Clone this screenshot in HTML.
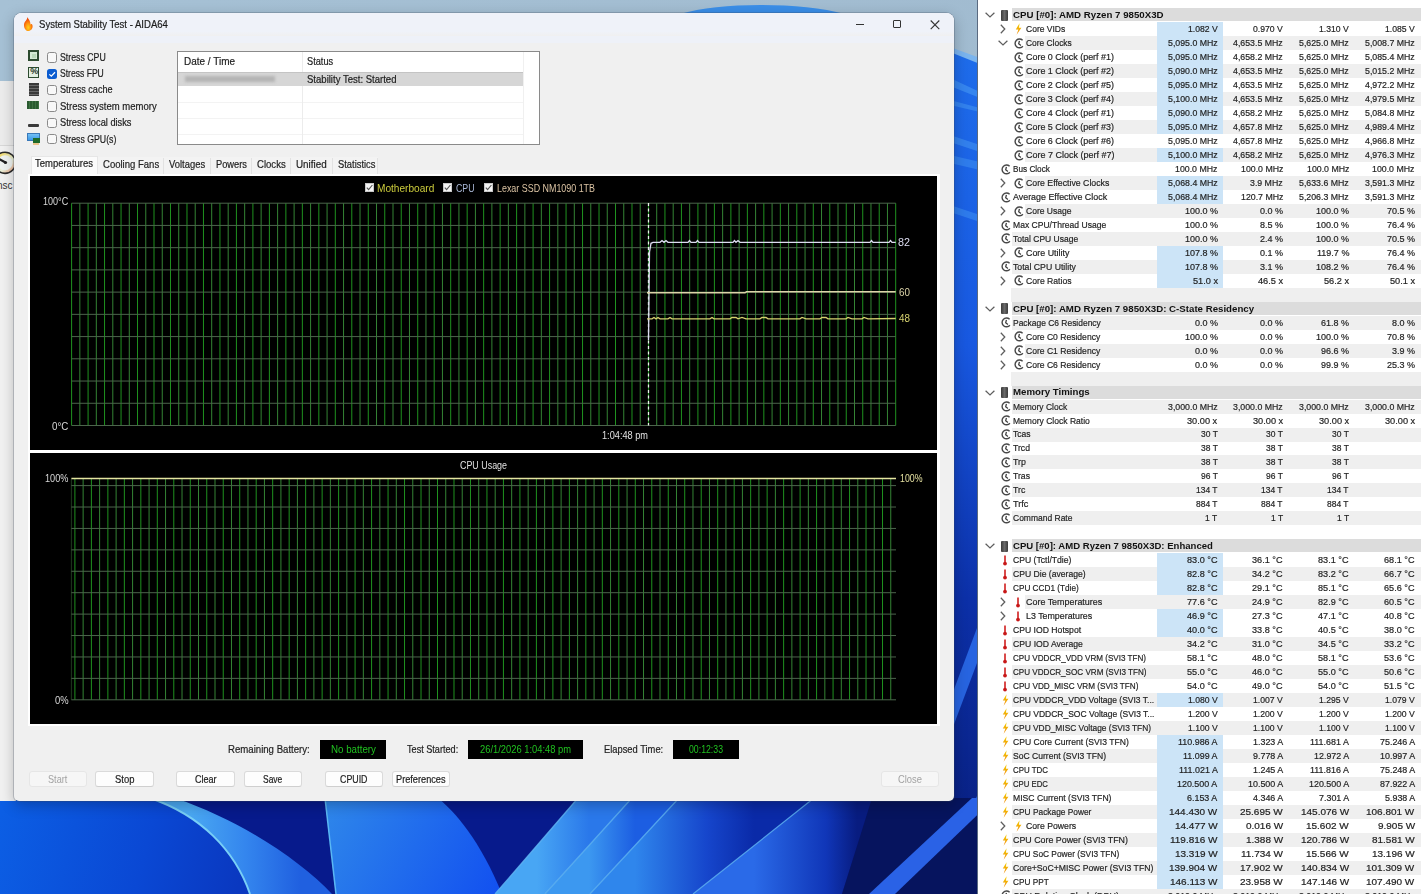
<!DOCTYPE html><html><head><meta charset="utf-8"><style>
*{margin:0;padding:0;box-sizing:border-box}
html,body{width:1428px;height:894px;overflow:hidden;background:#a9c2d6}
body{position:relative;font-family:"Liberation Sans",sans-serif;color:#1a1a1a}
.abs{position:absolute}
.t{position:absolute;white-space:pre;line-height:1}
.hw{-webkit-text-stroke:0.2px currentColor}
</style></head><body>
<svg class="abs" style="left:0;top:0" width="1428" height="894" viewBox="0 0 1428 894">
 <defs>
  <linearGradient id="wtop" x1="0" y1="0" x2="1" y2="0">
   <stop offset="0" stop-color="#a6c1d5"/><stop offset="1" stop-color="#9fb9ce"/>
  </linearGradient>
  <linearGradient id="wA" gradientUnits="userSpaceOnUse" x1="0" y1="820" x2="240" y2="880">
   <stop offset="0" stop-color="#0c5ee4"/><stop offset="0.6" stop-color="#0a48d4"/><stop offset="1" stop-color="#0a38c0"/>
  </linearGradient>
  <linearGradient id="wBand" gradientUnits="userSpaceOnUse" x1="190" y1="850" x2="300" y2="850">
   <stop offset="0" stop-color="#4aa8f2"/><stop offset="0.5" stop-color="#3486ee"/><stop offset="1" stop-color="#2060e0"/>
  </linearGradient>
  <linearGradient id="wC" gradientUnits="userSpaceOnUse" x1="330" y1="800" x2="500" y2="894">
   <stop offset="0" stop-color="#2e86ea"/><stop offset="1" stop-color="#1250f0"/>
  </linearGradient>
  <linearGradient id="wS1" gradientUnits="userSpaceOnUse" x1="537" y1="847" x2="589" y2="847">
   <stop offset="0" stop-color="#48a6f4"/><stop offset="1" stop-color="#2a78ea"/>
  </linearGradient>
  <linearGradient id="wS2" gradientUnits="userSpaceOnUse" x1="589" y1="847" x2="635" y2="847">
   <stop offset="0" stop-color="#3c98f0"/><stop offset="1" stop-color="#1c5ee2"/>
  </linearGradient>
  <linearGradient id="wS3" gradientUnits="userSpaceOnUse" x1="635" y1="847" x2="754" y2="847">
   <stop offset="0" stop-color="#2f86ec"/><stop offset="0.6" stop-color="#1646cc"/><stop offset="1" stop-color="#0a2aa8"/>
  </linearGradient>
  <linearGradient id="wS4" gradientUnits="userSpaceOnUse" x1="754" y1="847" x2="857" y2="847">
   <stop offset="0" stop-color="#2a6ae8"/><stop offset="0.7" stop-color="#1036b8"/><stop offset="1" stop-color="#081c80"/>
  </linearGradient>
  <linearGradient id="wR" x1="0" y1="0" x2="0" y2="1">
   <stop offset="0" stop-color="#1e6cea"/><stop offset="0.35" stop-color="#1858e0"/><stop offset="0.65" stop-color="#0c30a8"/><stop offset="1" stop-color="#081c78"/>
  </linearGradient>
 </defs>
 <rect x="0" y="0" width="1428" height="894" fill="url(#wtop)"/>
 <path d="M680 14 C720 2 800 2 845 14 Z" fill="#3a8ee8"/>
 <!-- right strip -->
 <path d="M950 50 L980 62 L980 894 L950 894 Z" fill="url(#wR)"/>
 <path d="M950 47 L980 58 L980 64 L950 52 Z" fill="#7ab4ee"/>
 <path d="M950 78 L980 92 L980 98 L950 86 Z" fill="#3c8cf0" opacity="0.8"/>
 <path d="M950 100 L980 108 L980 112 L950 105 Z" fill="#3c8cf0" opacity="0.7"/>
 <path d="M950 135 L980 145 L980 152 L950 142 Z" fill="#3c8cf0" opacity="0.7"/>
 <path d="M950 155 L980 162 L980 170 L950 163 Z" fill="#3c8cf0" opacity="0.6"/>
 <path d="M950 205 L980 215 L980 222 L950 212 Z" fill="#3c8cf0" opacity="0.6"/>
 <path d="M950 700 L980 620 L980 655 L950 735 Z" fill="#2a6ae8" opacity="0.9"/>
 <path d="M950 850 L980 790 L980 815 L950 875 Z" fill="#2a6ae8" opacity="0.8"/>
 <!-- bottom strip -->
 <rect x="0" y="798" width="980" height="96" fill="#071a8c"/>
 <path d="M0 798 L150 798 C200 815 235 850 250 894 L0 894 Z" fill="url(#wA)"/>
 <path d="M150 798 L175 798 C240 820 300 860 332 894 L250 894 C235 850 200 815 150 798 Z" fill="url(#wBand)"/>
 <path d="M150 798 C200 815 235 850 250 894" fill="none" stroke="#78cff6" stroke-width="2"/>
 <path d="M325 798 L438 798 C455 812 480 840 502 894 L336 894 Z" fill="url(#wC)"/>
 <path d="M325 798 L336 894" stroke="#5ab8f4" stroke-width="1.5"/>
 <path d="M578 798 L632 798 L545 894 L495 894 Z" fill="url(#wS1)"/>
 <path d="M632 798 L679 798 L590 894 L545 894 Z" fill="url(#wS2)"/>
 <path d="M679 798 L814 798 L693 894 L590 894 Z" fill="url(#wS3)"/>
 <path d="M814 798 L872 798 L842 894 L693 894 Z" fill="url(#wS4)"/>
 <path d="M872 798 L980 798 L980 894 L842 894 Z" fill="#06145e"/>
 <path d="M972 798 L995 798 L895 894 L869 894 Z" fill="#2a62e6"/>
 <path d="M578 798 L495 894 M632 798 L545 894 M679 798 L590 894 M814 798 L693 894" stroke="#62b8f4" stroke-width="1.2" opacity="0.8"/>
</svg>
<div class="abs" style="left:0;top:81px;width:16px;height:720px;background:#ececec"></div>
<div class="abs" style="left:0;top:145px;width:16px;height:656px;background:#f1f1f1;border-top:1px solid #d8d8d8"></div>
<svg class="abs" style="left:0;top:148px" width="16" height="45" viewBox="0 0 16 45">
 <defs><linearGradient id="gg" x1="0" y1="0" x2="1" y2="1"><stop offset="0" stop-color="#f4d040"/><stop offset="0.6" stop-color="#e8f0d8"/><stop offset="1" stop-color="#e89070"/></linearGradient></defs>
 <circle cx="5" cy="14.8" r="10.6" fill="url(#gg)" stroke="#2a2a2a" stroke-width="1.6"/>
 <circle cx="5" cy="14.8" r="7.5" fill="#eef2f0"/>
 <path d="M-1 11 L5.5 14.5" stroke="#222" stroke-width="2.2"/>
 <circle cx="5.5" cy="14.5" r="1.6" fill="#222"/>
 <text x="-3" y="40.5" font-family="Liberation Sans" font-size="10" fill="#333">nsc</text>
</svg>
<div class="abs" style="left:14px;top:12.5px;width:940px;height:788px;background:#f0f0f0;border-radius:8px 8px 5px 5px;box-shadow:0 0 0 1px rgba(60,70,90,0.25),0 4px 14px rgba(0,0,0,0.25);overflow:hidden">
 <div class="abs" style="left:0;top:0;width:940px;height:30px;background:#eef1f8"></div>
</div>
<div class="abs" style="left:14px;top:12.5px;width:940px;height:23px;background:linear-gradient(#eff2f9,#eff2f9 80%,#f0f0f0);border-radius:8px 8px 0 0"></div>
<svg class="abs" style="left:21px;top:16px" width="13" height="16" viewBox="0 0 13 16">
 <defs><radialGradient id="fl" cx="0.5" cy="0.75" r="0.6"><stop offset="0" stop-color="#ffd21a"/><stop offset="0.5" stop-color="#ff9410"/><stop offset="1" stop-color="#f04a08"/></radialGradient></defs>
 <path d="M6 1 C7 4 3 5 3 9 C3 13 5.5 15 7 15 C10 15 12 12.5 11.5 9.5 C11 7.5 10 8 9.5 8.5 C9.5 6 8 3 6 1Z" fill="url(#fl)"/>
</svg>
<div class="t hw" style="left:38.60px;top:18.69px;font-size:10.60px;color:#1c1c1c;transform:scaleX(0.9023);transform-origin:0 0">System Stability Test - AIDA64</div>
<div class="abs" style="left:856px;top:23.7px;width:8px;height:1px;background:#333"></div>
<div class="abs" style="left:893px;top:19.7px;width:8.2px;height:8.2px;border:1.1px solid #333;border-radius:1px"></div>
<svg class="abs" style="left:930px;top:19.5px" width="10" height="10" viewBox="0 0 10 10"><path d="M0.7 0.5 L9.3 9.2 M9.3 0.5 L0.7 9.2" stroke="#333" stroke-width="1.1"/></svg>
<div class="abs" style="left:47.2px;top:52.4px;width:10.3px;height:10.3px;border-radius:2.5px;background:#f8f8f8;border:1px solid #8a8a8a"></div>
<div class="t hw" style="left:60.20px;top:51.71px;font-size:10.50px;color:#1c1c1c;transform:scaleX(0.8351);transform-origin:0 0">Stress CPU</div>
<div class="abs" style="left:47.2px;top:68.6px;width:10.3px;height:10.3px;border-radius:2.5px;background:#0b5cd0"></div>
<svg class="abs" style="left:47.2px;top:68.6px" width="10.3" height="10.3" viewBox="0 0 10 10"><path d="M2.3 5.2 L4.2 7 L7.8 3.2" fill="none" stroke="#fff" stroke-width="1.2"/></svg>
<div class="t hw" style="left:60.20px;top:67.91px;font-size:10.50px;color:#1c1c1c;transform:scaleX(0.8160);transform-origin:0 0">Stress FPU</div>
<div class="abs" style="left:47.2px;top:85.0px;width:10.3px;height:10.3px;border-radius:2.5px;background:#f8f8f8;border:1px solid #8a8a8a"></div>
<div class="t hw" style="left:60.20px;top:84.31px;font-size:10.50px;color:#1c1c1c;transform:scaleX(0.8667);transform-origin:0 0">Stress cache</div>
<div class="abs" style="left:47.2px;top:101.4px;width:10.3px;height:10.3px;border-radius:2.5px;background:#f8f8f8;border:1px solid #8a8a8a"></div>
<div class="t hw" style="left:60.20px;top:100.71px;font-size:10.50px;color:#1c1c1c;transform:scaleX(0.9057);transform-origin:0 0">Stress system memory</div>
<div class="abs" style="left:47.2px;top:117.8px;width:10.3px;height:10.3px;border-radius:2.5px;background:#f8f8f8;border:1px solid #8a8a8a"></div>
<div class="t hw" style="left:60.20px;top:117.11px;font-size:10.50px;color:#1c1c1c;transform:scaleX(0.8815);transform-origin:0 0">Stress local disks</div>
<div class="abs" style="left:47.2px;top:134.2px;width:10.3px;height:10.3px;border-radius:2.5px;background:#f8f8f8;border:1px solid #8a8a8a"></div>
<div class="t hw" style="left:60.20px;top:133.51px;font-size:10.50px;color:#1c1c1c;transform:scaleX(0.8334);transform-origin:0 0">Stress GPU(s)</div>
<div class="abs" style="left:28.2px;top:50.2px;width:11.2px;height:11.2px;border:2.2px solid #2c4b2f;background:#d3ead3"></div>
<div class="abs" style="left:31.8px;top:53.8px;width:4px;height:4px;background:#b8d8b8"></div>
<div class="abs" style="left:28.2px;top:66.8px;width:11.2px;height:11.2px;border:1.8px solid #2c4b2f;background:#e3efe3"></div>
<div class="t" style="left:30.2px;top:67.2px;font-size:9px;color:#2a3a2a;font-weight:bold;letter-spacing:-0.5px">%</div>
<div class="abs" style="left:28.5px;top:83px;width:10.5px;height:13px;background:repeating-linear-gradient(#3a3a3a 0 2px,#6a6a6a 2px 3px)"></div>
<div class="abs" style="left:27.3px;top:101.1px;width:11.8px;height:8.2px;background:repeating-linear-gradient(90deg,#2a5a30 0 2px,#3c7040 2px 3px)"></div>
<div class="abs" style="left:28px;top:123.6px;width:11px;height:3.4px;background:#3a3a3a;border-radius:1px"></div>
<div class="abs" style="left:27px;top:133.2px;width:13px;height:7.5px;background:linear-gradient(#74c0f4,#3a98e8);border:1px solid #3a78b8"></div>
<div class="abs" style="left:32.5px;top:138px;width:7px;height:4.5px;background:#1e6a2a"></div>
<div class="abs" style="left:33px;top:142.5px;width:6px;height:2px;background:#e8b060;opacity:0.7"></div>
<div class="abs" style="left:177.4px;top:50.5px;width:363.1px;height:94.1px;background:#fff;border:1px solid #8a8a8a"></div>
<div class="abs" style="left:178.4px;top:102.1px;width:345px;height:1px;background:#f3f3f3"></div>
<div class="abs" style="left:178.4px;top:118.1px;width:345px;height:1px;background:#f3f3f3"></div>
<div class="abs" style="left:178.4px;top:133.6px;width:345px;height:1px;background:#f3f3f3"></div>
<div class="abs" style="left:301.7px;top:51.5px;width:1px;height:92px;background:#ececec"></div>
<div class="abs" style="left:523px;top:51.5px;width:1px;height:92px;background:#f0f0f0"></div>
<div class="abs" style="left:178.4px;top:71.5px;width:345px;height:14.6px;background:#d6d6d6;border-top:1px solid #c4c4c4"></div>
<div class="abs" style="left:185px;top:75.5px;width:90px;height:6px;background:#b4b4b4;filter:blur(1.5px)"></div>
<div class="t hw" style="left:183.60px;top:55.96px;font-size:10.80px;color:#222;transform:scaleX(0.9236);transform-origin:0 0">Date / Time</div>
<div class="t hw" style="left:306.80px;top:55.96px;font-size:10.80px;color:#222;transform:scaleX(0.8557);transform-origin:0 0">Status</div>
<div class="t hw" style="left:306.80px;top:73.66px;font-size:10.80px;color:#1c1c1c;transform:scaleX(0.8839);transform-origin:0 0">Stability Test: Started</div>
<div class="abs" style="left:98px;top:157px;width:280px;height:19px;background:#f3f3f3"></div>
<div class="abs" style="left:163.0px;top:158px;width:1px;height:18px;background:#e2e2e2"></div>
<div class="abs" style="left:210.0px;top:158px;width:1px;height:18px;background:#e2e2e2"></div>
<div class="abs" style="left:251.0px;top:158px;width:1px;height:18px;background:#e2e2e2"></div>
<div class="abs" style="left:290.4px;top:158px;width:1px;height:18px;background:#e2e2e2"></div>
<div class="abs" style="left:331.5px;top:158px;width:1px;height:18px;background:#e2e2e2"></div>
<div class="abs" style="left:377.4px;top:158px;width:1px;height:18px;background:#e2e2e2"></div>
<div class="abs" style="left:31px;top:156.2px;width:67px;height:20px;background:#fbfbfb;border:1px solid #e6e6e6;border-bottom:none"></div>
<div class="t hw" style="left:34.70px;top:157.76px;font-size:10.80px;color:#1c1c1c;transform:scaleX(0.8784);transform-origin:0 0">Temperatures</div>
<div class="t hw" style="left:103.40px;top:159.36px;font-size:10.80px;color:#222;transform:scaleX(0.8832);transform-origin:0 0">Cooling Fans</div>
<div class="t hw" style="left:169.30px;top:159.36px;font-size:10.80px;color:#222;transform:scaleX(0.8713);transform-origin:0 0">Voltages</div>
<div class="t hw" style="left:215.60px;top:159.36px;font-size:10.80px;color:#222;transform:scaleX(0.8608);transform-origin:0 0">Powers</div>
<div class="t hw" style="left:256.60px;top:159.36px;font-size:10.80px;color:#222;transform:scaleX(0.8857);transform-origin:0 0">Clocks</div>
<div class="t hw" style="left:296.00px;top:159.36px;font-size:10.80px;color:#222;transform:scaleX(0.9132);transform-origin:0 0">Unified</div>
<div class="t hw" style="left:337.50px;top:159.36px;font-size:10.80px;color:#222;transform:scaleX(0.8678);transform-origin:0 0">Statistics</div>
<div class="abs" style="left:28px;top:174px;width:911.5px;height:551.7px;background:#fff"></div>
<div class="abs" style="left:30.3px;top:176px;width:907.2px;height:273.8px;background:#000"></div>
<div class="abs" style="left:30.3px;top:453.4px;width:907.2px;height:270.3px;background:#000"></div>
<svg class="abs" style="left:0;top:0" width="1428" height="894" viewBox="0 0 1428 894"><line x1="71.60" y1="203.20" x2="71.60" y2="425.50" stroke="#1f921f" stroke-width="1"/><line x1="79.84" y1="203.20" x2="79.84" y2="425.50" stroke="#348434" stroke-width="1"/><line x1="88.08" y1="203.20" x2="88.08" y2="425.50" stroke="#1f921f" stroke-width="1"/><line x1="96.32" y1="203.20" x2="96.32" y2="425.50" stroke="#348434" stroke-width="1"/><line x1="104.56" y1="203.20" x2="104.56" y2="425.50" stroke="#1f921f" stroke-width="1"/><line x1="112.80" y1="203.20" x2="112.80" y2="425.50" stroke="#348434" stroke-width="1"/><line x1="121.05" y1="203.20" x2="121.05" y2="425.50" stroke="#1f921f" stroke-width="1"/><line x1="129.29" y1="203.20" x2="129.29" y2="425.50" stroke="#348434" stroke-width="1"/><line x1="137.53" y1="203.20" x2="137.53" y2="425.50" stroke="#1f921f" stroke-width="1"/><line x1="145.77" y1="203.20" x2="145.77" y2="425.50" stroke="#348434" stroke-width="1"/><line x1="154.01" y1="203.20" x2="154.01" y2="425.50" stroke="#1f921f" stroke-width="1"/><line x1="162.25" y1="203.20" x2="162.25" y2="425.50" stroke="#348434" stroke-width="1"/><line x1="170.49" y1="203.20" x2="170.49" y2="425.50" stroke="#1f921f" stroke-width="1"/><line x1="178.73" y1="203.20" x2="178.73" y2="425.50" stroke="#348434" stroke-width="1"/><line x1="186.97" y1="203.20" x2="186.97" y2="425.50" stroke="#1f921f" stroke-width="1"/><line x1="195.21" y1="203.20" x2="195.21" y2="425.50" stroke="#348434" stroke-width="1"/><line x1="203.46" y1="203.20" x2="203.46" y2="425.50" stroke="#1f921f" stroke-width="1"/><line x1="211.70" y1="203.20" x2="211.70" y2="425.50" stroke="#348434" stroke-width="1"/><line x1="219.94" y1="203.20" x2="219.94" y2="425.50" stroke="#1f921f" stroke-width="1"/><line x1="228.18" y1="203.20" x2="228.18" y2="425.50" stroke="#348434" stroke-width="1"/><line x1="236.42" y1="203.20" x2="236.42" y2="425.50" stroke="#1f921f" stroke-width="1"/><line x1="244.66" y1="203.20" x2="244.66" y2="425.50" stroke="#348434" stroke-width="1"/><line x1="252.90" y1="203.20" x2="252.90" y2="425.50" stroke="#1f921f" stroke-width="1"/><line x1="261.14" y1="203.20" x2="261.14" y2="425.50" stroke="#348434" stroke-width="1"/><line x1="269.38" y1="203.20" x2="269.38" y2="425.50" stroke="#1f921f" stroke-width="1"/><line x1="277.62" y1="203.20" x2="277.62" y2="425.50" stroke="#348434" stroke-width="1"/><line x1="285.87" y1="203.20" x2="285.87" y2="425.50" stroke="#1f921f" stroke-width="1"/><line x1="294.11" y1="203.20" x2="294.11" y2="425.50" stroke="#348434" stroke-width="1"/><line x1="302.35" y1="203.20" x2="302.35" y2="425.50" stroke="#1f921f" stroke-width="1"/><line x1="310.59" y1="203.20" x2="310.59" y2="425.50" stroke="#348434" stroke-width="1"/><line x1="318.83" y1="203.20" x2="318.83" y2="425.50" stroke="#1f921f" stroke-width="1"/><line x1="327.07" y1="203.20" x2="327.07" y2="425.50" stroke="#348434" stroke-width="1"/><line x1="335.31" y1="203.20" x2="335.31" y2="425.50" stroke="#1f921f" stroke-width="1"/><line x1="343.55" y1="203.20" x2="343.55" y2="425.50" stroke="#348434" stroke-width="1"/><line x1="351.79" y1="203.20" x2="351.79" y2="425.50" stroke="#1f921f" stroke-width="1"/><line x1="360.03" y1="203.20" x2="360.03" y2="425.50" stroke="#348434" stroke-width="1"/><line x1="368.28" y1="203.20" x2="368.28" y2="425.50" stroke="#1f921f" stroke-width="1"/><line x1="376.52" y1="203.20" x2="376.52" y2="425.50" stroke="#348434" stroke-width="1"/><line x1="384.76" y1="203.20" x2="384.76" y2="425.50" stroke="#1f921f" stroke-width="1"/><line x1="393.00" y1="203.20" x2="393.00" y2="425.50" stroke="#348434" stroke-width="1"/><line x1="401.24" y1="203.20" x2="401.24" y2="425.50" stroke="#1f921f" stroke-width="1"/><line x1="409.48" y1="203.20" x2="409.48" y2="425.50" stroke="#348434" stroke-width="1"/><line x1="417.72" y1="203.20" x2="417.72" y2="425.50" stroke="#1f921f" stroke-width="1"/><line x1="425.96" y1="203.20" x2="425.96" y2="425.50" stroke="#348434" stroke-width="1"/><line x1="434.20" y1="203.20" x2="434.20" y2="425.50" stroke="#1f921f" stroke-width="1"/><line x1="442.45" y1="203.20" x2="442.45" y2="425.50" stroke="#348434" stroke-width="1"/><line x1="450.69" y1="203.20" x2="450.69" y2="425.50" stroke="#1f921f" stroke-width="1"/><line x1="458.93" y1="203.20" x2="458.93" y2="425.50" stroke="#348434" stroke-width="1"/><line x1="467.17" y1="203.20" x2="467.17" y2="425.50" stroke="#1f921f" stroke-width="1"/><line x1="475.41" y1="203.20" x2="475.41" y2="425.50" stroke="#348434" stroke-width="1"/><line x1="483.65" y1="203.20" x2="483.65" y2="425.50" stroke="#1f921f" stroke-width="1"/><line x1="491.89" y1="203.20" x2="491.89" y2="425.50" stroke="#348434" stroke-width="1"/><line x1="500.13" y1="203.20" x2="500.13" y2="425.50" stroke="#1f921f" stroke-width="1"/><line x1="508.37" y1="203.20" x2="508.37" y2="425.50" stroke="#348434" stroke-width="1"/><line x1="516.61" y1="203.20" x2="516.61" y2="425.50" stroke="#1f921f" stroke-width="1"/><line x1="524.86" y1="203.20" x2="524.86" y2="425.50" stroke="#348434" stroke-width="1"/><line x1="533.10" y1="203.20" x2="533.10" y2="425.50" stroke="#1f921f" stroke-width="1"/><line x1="541.34" y1="203.20" x2="541.34" y2="425.50" stroke="#348434" stroke-width="1"/><line x1="549.58" y1="203.20" x2="549.58" y2="425.50" stroke="#1f921f" stroke-width="1"/><line x1="557.82" y1="203.20" x2="557.82" y2="425.50" stroke="#348434" stroke-width="1"/><line x1="566.06" y1="203.20" x2="566.06" y2="425.50" stroke="#1f921f" stroke-width="1"/><line x1="574.30" y1="203.20" x2="574.30" y2="425.50" stroke="#348434" stroke-width="1"/><line x1="582.54" y1="203.20" x2="582.54" y2="425.50" stroke="#1f921f" stroke-width="1"/><line x1="590.78" y1="203.20" x2="590.78" y2="425.50" stroke="#348434" stroke-width="1"/><line x1="599.02" y1="203.20" x2="599.02" y2="425.50" stroke="#1f921f" stroke-width="1"/><line x1="607.26" y1="203.20" x2="607.26" y2="425.50" stroke="#348434" stroke-width="1"/><line x1="615.51" y1="203.20" x2="615.51" y2="425.50" stroke="#1f921f" stroke-width="1"/><line x1="623.75" y1="203.20" x2="623.75" y2="425.50" stroke="#348434" stroke-width="1"/><line x1="631.99" y1="203.20" x2="631.99" y2="425.50" stroke="#1f921f" stroke-width="1"/><line x1="640.23" y1="203.20" x2="640.23" y2="425.50" stroke="#348434" stroke-width="1"/><line x1="648.47" y1="203.20" x2="648.47" y2="425.50" stroke="#1f921f" stroke-width="1"/><line x1="656.71" y1="203.20" x2="656.71" y2="425.50" stroke="#348434" stroke-width="1"/><line x1="664.95" y1="203.20" x2="664.95" y2="425.50" stroke="#1f921f" stroke-width="1"/><line x1="673.19" y1="203.20" x2="673.19" y2="425.50" stroke="#348434" stroke-width="1"/><line x1="681.43" y1="203.20" x2="681.43" y2="425.50" stroke="#1f921f" stroke-width="1"/><line x1="689.68" y1="203.20" x2="689.68" y2="425.50" stroke="#348434" stroke-width="1"/><line x1="697.92" y1="203.20" x2="697.92" y2="425.50" stroke="#1f921f" stroke-width="1"/><line x1="706.16" y1="203.20" x2="706.16" y2="425.50" stroke="#348434" stroke-width="1"/><line x1="714.40" y1="203.20" x2="714.40" y2="425.50" stroke="#1f921f" stroke-width="1"/><line x1="722.64" y1="203.20" x2="722.64" y2="425.50" stroke="#348434" stroke-width="1"/><line x1="730.88" y1="203.20" x2="730.88" y2="425.50" stroke="#1f921f" stroke-width="1"/><line x1="739.12" y1="203.20" x2="739.12" y2="425.50" stroke="#348434" stroke-width="1"/><line x1="747.36" y1="203.20" x2="747.36" y2="425.50" stroke="#1f921f" stroke-width="1"/><line x1="755.60" y1="203.20" x2="755.60" y2="425.50" stroke="#348434" stroke-width="1"/><line x1="763.84" y1="203.20" x2="763.84" y2="425.50" stroke="#1f921f" stroke-width="1"/><line x1="772.09" y1="203.20" x2="772.09" y2="425.50" stroke="#348434" stroke-width="1"/><line x1="780.33" y1="203.20" x2="780.33" y2="425.50" stroke="#1f921f" stroke-width="1"/><line x1="788.57" y1="203.20" x2="788.57" y2="425.50" stroke="#348434" stroke-width="1"/><line x1="796.81" y1="203.20" x2="796.81" y2="425.50" stroke="#1f921f" stroke-width="1"/><line x1="805.05" y1="203.20" x2="805.05" y2="425.50" stroke="#348434" stroke-width="1"/><line x1="813.29" y1="203.20" x2="813.29" y2="425.50" stroke="#1f921f" stroke-width="1"/><line x1="821.53" y1="203.20" x2="821.53" y2="425.50" stroke="#348434" stroke-width="1"/><line x1="829.77" y1="203.20" x2="829.77" y2="425.50" stroke="#1f921f" stroke-width="1"/><line x1="838.01" y1="203.20" x2="838.01" y2="425.50" stroke="#348434" stroke-width="1"/><line x1="846.25" y1="203.20" x2="846.25" y2="425.50" stroke="#1f921f" stroke-width="1"/><line x1="854.50" y1="203.20" x2="854.50" y2="425.50" stroke="#348434" stroke-width="1"/><line x1="862.74" y1="203.20" x2="862.74" y2="425.50" stroke="#1f921f" stroke-width="1"/><line x1="870.98" y1="203.20" x2="870.98" y2="425.50" stroke="#348434" stroke-width="1"/><line x1="879.22" y1="203.20" x2="879.22" y2="425.50" stroke="#1f921f" stroke-width="1"/><line x1="887.46" y1="203.20" x2="887.46" y2="425.50" stroke="#348434" stroke-width="1"/><line x1="895.70" y1="203.20" x2="895.70" y2="425.50" stroke="#1f921f" stroke-width="1"/><line x1="71.60" y1="203.20" x2="895.70" y2="203.20" stroke="#4c664c" stroke-width="1"/><line x1="71.60" y1="225.43" x2="895.70" y2="225.43" stroke="#4c664c" stroke-width="1"/><line x1="71.60" y1="247.66" x2="895.70" y2="247.66" stroke="#4c664c" stroke-width="1"/><line x1="71.60" y1="269.89" x2="895.70" y2="269.89" stroke="#4c664c" stroke-width="1"/><line x1="71.60" y1="292.12" x2="895.70" y2="292.12" stroke="#4c664c" stroke-width="1"/><line x1="71.60" y1="314.35" x2="895.70" y2="314.35" stroke="#4c664c" stroke-width="1"/><line x1="71.60" y1="336.58" x2="895.70" y2="336.58" stroke="#4c664c" stroke-width="1"/><line x1="71.60" y1="358.81" x2="895.70" y2="358.81" stroke="#4c664c" stroke-width="1"/><line x1="71.60" y1="381.04" x2="895.70" y2="381.04" stroke="#4c664c" stroke-width="1"/><line x1="71.60" y1="403.27" x2="895.70" y2="403.27" stroke="#4c664c" stroke-width="1"/><line x1="71.60" y1="425.50" x2="895.70" y2="425.50" stroke="#4c664c" stroke-width="1"/><line x1="74.90" y1="478.60" x2="74.90" y2="699.80" stroke="#1f921f" stroke-width="1"/><line x1="83.14" y1="478.60" x2="83.14" y2="699.80" stroke="#348434" stroke-width="1"/><line x1="91.38" y1="478.60" x2="91.38" y2="699.80" stroke="#1f921f" stroke-width="1"/><line x1="99.62" y1="478.60" x2="99.62" y2="699.80" stroke="#348434" stroke-width="1"/><line x1="107.86" y1="478.60" x2="107.86" y2="699.80" stroke="#1f921f" stroke-width="1"/><line x1="116.11" y1="478.60" x2="116.11" y2="699.80" stroke="#348434" stroke-width="1"/><line x1="124.35" y1="478.60" x2="124.35" y2="699.80" stroke="#1f921f" stroke-width="1"/><line x1="132.59" y1="478.60" x2="132.59" y2="699.80" stroke="#348434" stroke-width="1"/><line x1="140.83" y1="478.60" x2="140.83" y2="699.80" stroke="#1f921f" stroke-width="1"/><line x1="149.07" y1="478.60" x2="149.07" y2="699.80" stroke="#348434" stroke-width="1"/><line x1="157.31" y1="478.60" x2="157.31" y2="699.80" stroke="#1f921f" stroke-width="1"/><line x1="165.55" y1="478.60" x2="165.55" y2="699.80" stroke="#348434" stroke-width="1"/><line x1="173.79" y1="478.60" x2="173.79" y2="699.80" stroke="#1f921f" stroke-width="1"/><line x1="182.03" y1="478.60" x2="182.03" y2="699.80" stroke="#348434" stroke-width="1"/><line x1="190.27" y1="478.60" x2="190.27" y2="699.80" stroke="#1f921f" stroke-width="1"/><line x1="198.51" y1="478.60" x2="198.51" y2="699.80" stroke="#348434" stroke-width="1"/><line x1="206.76" y1="478.60" x2="206.76" y2="699.80" stroke="#1f921f" stroke-width="1"/><line x1="215.00" y1="478.60" x2="215.00" y2="699.80" stroke="#348434" stroke-width="1"/><line x1="223.24" y1="478.60" x2="223.24" y2="699.80" stroke="#1f921f" stroke-width="1"/><line x1="231.48" y1="478.60" x2="231.48" y2="699.80" stroke="#348434" stroke-width="1"/><line x1="239.72" y1="478.60" x2="239.72" y2="699.80" stroke="#1f921f" stroke-width="1"/><line x1="247.96" y1="478.60" x2="247.96" y2="699.80" stroke="#348434" stroke-width="1"/><line x1="256.20" y1="478.60" x2="256.20" y2="699.80" stroke="#1f921f" stroke-width="1"/><line x1="264.44" y1="478.60" x2="264.44" y2="699.80" stroke="#348434" stroke-width="1"/><line x1="272.68" y1="478.60" x2="272.68" y2="699.80" stroke="#1f921f" stroke-width="1"/><line x1="280.92" y1="478.60" x2="280.92" y2="699.80" stroke="#348434" stroke-width="1"/><line x1="289.17" y1="478.60" x2="289.17" y2="699.80" stroke="#1f921f" stroke-width="1"/><line x1="297.41" y1="478.60" x2="297.41" y2="699.80" stroke="#348434" stroke-width="1"/><line x1="305.65" y1="478.60" x2="305.65" y2="699.80" stroke="#1f921f" stroke-width="1"/><line x1="313.89" y1="478.60" x2="313.89" y2="699.80" stroke="#348434" stroke-width="1"/><line x1="322.13" y1="478.60" x2="322.13" y2="699.80" stroke="#1f921f" stroke-width="1"/><line x1="330.37" y1="478.60" x2="330.37" y2="699.80" stroke="#348434" stroke-width="1"/><line x1="338.61" y1="478.60" x2="338.61" y2="699.80" stroke="#1f921f" stroke-width="1"/><line x1="346.85" y1="478.60" x2="346.85" y2="699.80" stroke="#348434" stroke-width="1"/><line x1="355.09" y1="478.60" x2="355.09" y2="699.80" stroke="#1f921f" stroke-width="1"/><line x1="363.33" y1="478.60" x2="363.33" y2="699.80" stroke="#348434" stroke-width="1"/><line x1="371.58" y1="478.60" x2="371.58" y2="699.80" stroke="#1f921f" stroke-width="1"/><line x1="379.82" y1="478.60" x2="379.82" y2="699.80" stroke="#348434" stroke-width="1"/><line x1="388.06" y1="478.60" x2="388.06" y2="699.80" stroke="#1f921f" stroke-width="1"/><line x1="396.30" y1="478.60" x2="396.30" y2="699.80" stroke="#348434" stroke-width="1"/><line x1="404.54" y1="478.60" x2="404.54" y2="699.80" stroke="#1f921f" stroke-width="1"/><line x1="412.78" y1="478.60" x2="412.78" y2="699.80" stroke="#348434" stroke-width="1"/><line x1="421.02" y1="478.60" x2="421.02" y2="699.80" stroke="#1f921f" stroke-width="1"/><line x1="429.26" y1="478.60" x2="429.26" y2="699.80" stroke="#348434" stroke-width="1"/><line x1="437.50" y1="478.60" x2="437.50" y2="699.80" stroke="#1f921f" stroke-width="1"/><line x1="445.74" y1="478.60" x2="445.74" y2="699.80" stroke="#348434" stroke-width="1"/><line x1="453.99" y1="478.60" x2="453.99" y2="699.80" stroke="#1f921f" stroke-width="1"/><line x1="462.23" y1="478.60" x2="462.23" y2="699.80" stroke="#348434" stroke-width="1"/><line x1="470.47" y1="478.60" x2="470.47" y2="699.80" stroke="#1f921f" stroke-width="1"/><line x1="478.71" y1="478.60" x2="478.71" y2="699.80" stroke="#348434" stroke-width="1"/><line x1="486.95" y1="478.60" x2="486.95" y2="699.80" stroke="#1f921f" stroke-width="1"/><line x1="495.19" y1="478.60" x2="495.19" y2="699.80" stroke="#348434" stroke-width="1"/><line x1="503.43" y1="478.60" x2="503.43" y2="699.80" stroke="#1f921f" stroke-width="1"/><line x1="511.67" y1="478.60" x2="511.67" y2="699.80" stroke="#348434" stroke-width="1"/><line x1="519.91" y1="478.60" x2="519.91" y2="699.80" stroke="#1f921f" stroke-width="1"/><line x1="528.15" y1="478.60" x2="528.15" y2="699.80" stroke="#348434" stroke-width="1"/><line x1="536.40" y1="478.60" x2="536.40" y2="699.80" stroke="#1f921f" stroke-width="1"/><line x1="544.64" y1="478.60" x2="544.64" y2="699.80" stroke="#348434" stroke-width="1"/><line x1="552.88" y1="478.60" x2="552.88" y2="699.80" stroke="#1f921f" stroke-width="1"/><line x1="561.12" y1="478.60" x2="561.12" y2="699.80" stroke="#348434" stroke-width="1"/><line x1="569.36" y1="478.60" x2="569.36" y2="699.80" stroke="#1f921f" stroke-width="1"/><line x1="577.60" y1="478.60" x2="577.60" y2="699.80" stroke="#348434" stroke-width="1"/><line x1="585.84" y1="478.60" x2="585.84" y2="699.80" stroke="#1f921f" stroke-width="1"/><line x1="594.08" y1="478.60" x2="594.08" y2="699.80" stroke="#348434" stroke-width="1"/><line x1="602.32" y1="478.60" x2="602.32" y2="699.80" stroke="#1f921f" stroke-width="1"/><line x1="610.56" y1="478.60" x2="610.56" y2="699.80" stroke="#348434" stroke-width="1"/><line x1="618.81" y1="478.60" x2="618.81" y2="699.80" stroke="#1f921f" stroke-width="1"/><line x1="627.05" y1="478.60" x2="627.05" y2="699.80" stroke="#348434" stroke-width="1"/><line x1="635.29" y1="478.60" x2="635.29" y2="699.80" stroke="#1f921f" stroke-width="1"/><line x1="643.53" y1="478.60" x2="643.53" y2="699.80" stroke="#348434" stroke-width="1"/><line x1="651.77" y1="478.60" x2="651.77" y2="699.80" stroke="#1f921f" stroke-width="1"/><line x1="660.01" y1="478.60" x2="660.01" y2="699.80" stroke="#348434" stroke-width="1"/><line x1="668.25" y1="478.60" x2="668.25" y2="699.80" stroke="#1f921f" stroke-width="1"/><line x1="676.49" y1="478.60" x2="676.49" y2="699.80" stroke="#348434" stroke-width="1"/><line x1="684.73" y1="478.60" x2="684.73" y2="699.80" stroke="#1f921f" stroke-width="1"/><line x1="692.97" y1="478.60" x2="692.97" y2="699.80" stroke="#348434" stroke-width="1"/><line x1="701.22" y1="478.60" x2="701.22" y2="699.80" stroke="#1f921f" stroke-width="1"/><line x1="709.46" y1="478.60" x2="709.46" y2="699.80" stroke="#348434" stroke-width="1"/><line x1="717.70" y1="478.60" x2="717.70" y2="699.80" stroke="#1f921f" stroke-width="1"/><line x1="725.94" y1="478.60" x2="725.94" y2="699.80" stroke="#348434" stroke-width="1"/><line x1="734.18" y1="478.60" x2="734.18" y2="699.80" stroke="#1f921f" stroke-width="1"/><line x1="742.42" y1="478.60" x2="742.42" y2="699.80" stroke="#348434" stroke-width="1"/><line x1="750.66" y1="478.60" x2="750.66" y2="699.80" stroke="#1f921f" stroke-width="1"/><line x1="758.90" y1="478.60" x2="758.90" y2="699.80" stroke="#348434" stroke-width="1"/><line x1="767.14" y1="478.60" x2="767.14" y2="699.80" stroke="#1f921f" stroke-width="1"/><line x1="775.38" y1="478.60" x2="775.38" y2="699.80" stroke="#348434" stroke-width="1"/><line x1="783.63" y1="478.60" x2="783.63" y2="699.80" stroke="#1f921f" stroke-width="1"/><line x1="791.87" y1="478.60" x2="791.87" y2="699.80" stroke="#348434" stroke-width="1"/><line x1="800.11" y1="478.60" x2="800.11" y2="699.80" stroke="#1f921f" stroke-width="1"/><line x1="808.35" y1="478.60" x2="808.35" y2="699.80" stroke="#348434" stroke-width="1"/><line x1="816.59" y1="478.60" x2="816.59" y2="699.80" stroke="#1f921f" stroke-width="1"/><line x1="824.83" y1="478.60" x2="824.83" y2="699.80" stroke="#348434" stroke-width="1"/><line x1="833.07" y1="478.60" x2="833.07" y2="699.80" stroke="#1f921f" stroke-width="1"/><line x1="841.31" y1="478.60" x2="841.31" y2="699.80" stroke="#348434" stroke-width="1"/><line x1="849.55" y1="478.60" x2="849.55" y2="699.80" stroke="#1f921f" stroke-width="1"/><line x1="857.79" y1="478.60" x2="857.79" y2="699.80" stroke="#348434" stroke-width="1"/><line x1="866.04" y1="478.60" x2="866.04" y2="699.80" stroke="#1f921f" stroke-width="1"/><line x1="874.28" y1="478.60" x2="874.28" y2="699.80" stroke="#348434" stroke-width="1"/><line x1="882.52" y1="478.60" x2="882.52" y2="699.80" stroke="#1f921f" stroke-width="1"/><line x1="890.76" y1="478.60" x2="890.76" y2="699.80" stroke="#348434" stroke-width="1"/><line x1="71.40" y1="478.60" x2="71.40" y2="699.80" stroke="#1c3a1c" stroke-width="1"/><line x1="71.40" y1="485.60" x2="896.00" y2="485.60" stroke="#4c664c" stroke-width="1"/><line x1="71.40" y1="507.02" x2="896.00" y2="507.02" stroke="#4c664c" stroke-width="1"/><line x1="71.40" y1="528.44" x2="896.00" y2="528.44" stroke="#4c664c" stroke-width="1"/><line x1="71.40" y1="549.86" x2="896.00" y2="549.86" stroke="#4c664c" stroke-width="1"/><line x1="71.40" y1="571.28" x2="896.00" y2="571.28" stroke="#4c664c" stroke-width="1"/><line x1="71.40" y1="592.70" x2="896.00" y2="592.70" stroke="#4c664c" stroke-width="1"/><line x1="71.40" y1="614.12" x2="896.00" y2="614.12" stroke="#4c664c" stroke-width="1"/><line x1="71.40" y1="635.54" x2="896.00" y2="635.54" stroke="#4c664c" stroke-width="1"/><line x1="71.40" y1="656.96" x2="896.00" y2="656.96" stroke="#4c664c" stroke-width="1"/><line x1="71.40" y1="678.38" x2="896.00" y2="678.38" stroke="#4c664c" stroke-width="1"/><line x1="71.40" y1="699.80" x2="896.00" y2="699.80" stroke="#4c664c" stroke-width="1"/>
<line x1="648.5" y1="203" x2="648.5" y2="425.5" stroke="#e8f0e8" stroke-width="1.3" stroke-dasharray="3 2.5"/>
<path d="M648.5 340 L649.5 252 L651 243.3 L653 242.3 L660 242.3 L662 240.5 L664 242.3 L666 240.5 L668 242.3 L688 242.3 L689.5 240.5 L691 242.3 L696 242.3 L697.5 240.5 L699 242.3 L733 242.3 L734.5 240.5 L736 242.3 L738 240.5 L740 242.3 L870 242.3 L871.5 240.5 L873 242.3 L889 242.3 L890.5 240.5 L892 242.3 L895.7 242.3" fill="none" stroke="#dcdcf0" stroke-width="1.3"/>
<path d="M647 292.8 L745 292.8 L746.5 291.8 L895.7 291.8" fill="none" stroke="#dcd4a8" stroke-width="1.4"/>
<path d="M647 318.9 L652 318.9 L654 317.5 L656 318.9 L658 317.5 L660 318.9 L668 318.9 L670 317.5 L672 318.9 L710 318.9 L712 317.5 L714 318.9 L730 318.9 L732 317.5 L736 317.5 L738 318.9 L742 317.5 L746 318.9 L760 318.9 L762 317.5 L766 317.5 L768 318.9 L800 318.9 L802 317.5 L806 318.9 L820 318.9 L822 317.5 L826 317.5 L828 318.9 L846 318.9 L848 317.5 L852 318.9 L862 318.9 L864 317.5 L868 318.9 L895.7 318.5" fill="none" stroke="#d4d070" stroke-width="1.3"/>
<line x1="71.4" y1="478.6" x2="896" y2="478.6" stroke="#e4e4a0" stroke-width="1.5"/>
</svg>
<div class="abs" style="left:364.6px;top:183.3px;width:9px;height:9px;background:#f4f4f4;border:1px solid #c8c8c8"></div>
<svg class="abs" style="left:364.6px;top:183.3px" width="9" height="9" viewBox="0 0 9 9"><path d="M1.8 4.6 L3.6 6.6 L7.4 2" fill="none" stroke="#555" stroke-width="1.1"/></svg>
<div class="abs" style="left:443.4px;top:183.3px;width:9px;height:9px;background:#f4f4f4;border:1px solid #c8c8c8"></div>
<svg class="abs" style="left:443.4px;top:183.3px" width="9" height="9" viewBox="0 0 9 9"><path d="M1.8 4.6 L3.6 6.6 L7.4 2" fill="none" stroke="#555" stroke-width="1.1"/></svg>
<div class="abs" style="left:483.7px;top:183.3px;width:9px;height:9px;background:#f4f4f4;border:1px solid #c8c8c8"></div>
<svg class="abs" style="left:483.7px;top:183.3px" width="9" height="9" viewBox="0 0 9 9"><path d="M1.8 4.6 L3.6 6.6 L7.4 2" fill="none" stroke="#555" stroke-width="1.1"/></svg>
<div class="t" style="left:376.90px;top:182.81px;font-size:10.50px;color:#cccc3c;transform:scaleX(0.9625);transform-origin:0 0">Motherboard</div>
<div class="t" style="left:456.00px;top:182.81px;font-size:10.50px;color:#aab8d6;transform:scaleX(0.8390);transform-origin:0 0">CPU</div>
<div class="t" style="left:496.50px;top:182.81px;font-size:10.50px;color:#dcc4a4;transform:scaleX(0.8481);transform-origin:0 0">Lexar SSD NM1090 1TB</div>
<div class="t" style="left:42.80px;top:196.01px;font-size:10.50px;color:#d8d8d8;transform:scaleX(0.8600);transform-origin:0 0">100°C</div>
<div class="t" style="left:51.60px;top:420.71px;font-size:10.50px;color:#d8d8d8;transform:scaleX(0.9307);transform-origin:0 0">0°C</div>
<div class="t" style="left:602.00px;top:429.71px;font-size:10.50px;color:#e0e0e0;transform:scaleX(0.8756);transform-origin:0 0">1:04:48 pm</div>
<div class="t" style="left:898.00px;top:237.01px;font-size:10.50px;color:#dcdcf0;transform:scaleX(1.0275);transform-origin:0 0">82</div>
<div class="t" style="left:898.50px;top:286.71px;font-size:10.50px;color:#dcd4a8;transform:scaleX(0.9418);transform-origin:0 0">60</div>
<div class="t" style="left:898.50px;top:312.81px;font-size:10.50px;color:#d8d470;transform:scaleX(0.9418);transform-origin:0 0">48</div>
<div class="t" style="left:460.20px;top:460.31px;font-size:10.50px;color:#e0e0e0;transform:scaleX(0.8478);transform-origin:0 0">CPU Usage</div>
<div class="t" style="left:45.00px;top:473.41px;font-size:10.50px;color:#d8d8d8;transform:scaleX(0.8713);transform-origin:0 0">100%</div>
<div class="t" style="left:54.80px;top:694.71px;font-size:10.50px;color:#d8d8d8;transform:scaleX(0.8962);transform-origin:0 0">0%</div>
<div class="t" style="left:899.50px;top:473.41px;font-size:10.50px;color:#e4e0a0;transform:scaleX(0.8378);transform-origin:0 0">100%</div>
<div class="t hw" style="left:228.00px;top:743.56px;font-size:10.80px;color:#222;transform:scaleX(0.8907);transform-origin:0 0">Remaining Battery:</div>
<div class="abs" style="left:320px;top:739.7px;width:66px;height:19.4px;background:#000"></div>
<div class="t" style="left:330.50px;top:743.81px;font-size:10.50px;color:#20c020;transform:scaleX(0.9290);transform-origin:0 0">No battery</div>
<div class="t hw" style="left:406.50px;top:743.56px;font-size:10.80px;color:#222;transform:scaleX(0.8445);transform-origin:0 0">Test Started:</div>
<div class="abs" style="left:468px;top:739.7px;width:115.4px;height:19.4px;background:#000"></div>
<div class="t" style="left:480.20px;top:743.81px;font-size:10.50px;color:#20c020;transform:scaleX(0.8907);transform-origin:0 0">26/1/2026 1:04:48 pm</div>
<div class="t hw" style="left:603.60px;top:743.56px;font-size:10.80px;color:#222;transform:scaleX(0.8651);transform-origin:0 0">Elapsed Time:</div>
<div class="abs" style="left:673px;top:739.7px;width:65.6px;height:19.4px;background:#000"></div>
<div class="t" style="left:688.80px;top:743.81px;font-size:10.50px;color:#20c020;transform:scaleX(0.8319);transform-origin:0 0">00:12:33</div>
<div class="abs" style="left:28.5px;top:771px;width:58.5px;height:15.7px;background:#f6f6f6;border:1px solid #e6e6e6;border-radius:3px"></div>
<div class="t" style="left:48.10px;top:773.86px;font-size:10.80px;color:#a2a2a2;transform:scaleX(0.8462);transform-origin:0 0">Start</div>
<div class="abs" style="left:95.4px;top:771px;width:58.6px;height:15.7px;background:#fdfdfd;border:1px solid #dadada;border-bottom-color:#cfcfcf;border-radius:3px"></div>
<div class="t hw" style="left:115.00px;top:773.86px;font-size:10.80px;color:#1c1c1c;transform:scaleX(0.8732);transform-origin:0 0">Stop</div>
<div class="abs" style="left:176.4px;top:771px;width:58.8px;height:15.7px;background:#fdfdfd;border:1px solid #dadada;border-bottom-color:#cfcfcf;border-radius:3px"></div>
<div class="t hw" style="left:195.00px;top:773.86px;font-size:10.80px;color:#1c1c1c;transform:scaleX(0.8369);transform-origin:0 0">Clear</div>
<div class="abs" style="left:243.8px;top:771px;width:58.5px;height:15.7px;background:#fdfdfd;border:1px solid #dadada;border-bottom-color:#cfcfcf;border-radius:3px"></div>
<div class="t hw" style="left:263.40px;top:773.86px;font-size:10.80px;color:#1c1c1c;transform:scaleX(0.7840);transform-origin:0 0">Save</div>
<div class="abs" style="left:324.6px;top:771px;width:58.7px;height:15.7px;background:#fdfdfd;border:1px solid #dadada;border-bottom-color:#cfcfcf;border-radius:3px"></div>
<div class="t hw" style="left:340.20px;top:773.86px;font-size:10.80px;color:#1c1c1c;transform:scaleX(0.8184);transform-origin:0 0">CPUID</div>
<div class="abs" style="left:391.7px;top:771px;width:58.1px;height:15.7px;background:#fdfdfd;border:1px solid #dadada;border-bottom-color:#cfcfcf;border-radius:3px"></div>
<div class="t hw" style="left:395.95px;top:773.86px;font-size:10.80px;color:#1c1c1c;transform:scaleX(0.8518);transform-origin:0 0">Preferences</div>
<div class="abs" style="left:881.0px;top:771px;width:57.6px;height:15.7px;background:#f6f6f6;border:1px solid #e6e6e6;border-radius:3px"></div>
<div class="t" style="left:897.80px;top:773.86px;font-size:10.80px;color:#a2a2a2;transform:scaleX(0.8692);transform-origin:0 0">Close</div>
<div class="abs" style="left:977px;top:0;width:451px;height:894px;background:#fff;border-left:1px solid #5a6a80"></div>
<div class="abs" style="left:1012px;top:8.40px;width:408.6px;height:13px;background:#dcdcdc"></div>
<svg class="abs" style="left:984.6px;top:12.4px" width="10" height="6" viewBox="0 0 10 6"><path d="M0.6 0.8 L5 5 L9.4 0.8" fill="none" stroke="#5e5e5e" stroke-width="1.25"/></svg>
<div class="abs" style="left:1001.3px;top:9.7px;width:7px;height:11px;background:linear-gradient(90deg,#3a3a3a,#6a6a6a 50%,#3a3a3a);border-radius:1px"></div>
<div class="t" style="left:1013.30px;top:10.22px;font-size:9.90px;color:#111;transform:scaleX(0.9825);transform-origin:0 0;font-weight:bold">CPU [#0]: AMD Ryzen 7 9850X3D</div>
<div class="abs" style="left:1157px;top:22.37px;width:65.7px;height:14px;background:#cce4f7"></div>
<svg class="abs" style="left:1000.0px;top:24.4px" width="6" height="10" viewBox="0 0 6 10"><path d="M0.8 0.8 L4.8 5 L0.8 9.2" fill="none" stroke="#5e5e5e" stroke-width="1.25"/></svg>
<svg class="abs" style="left:1013.5px;top:23.4px" width="9" height="12" viewBox="0 0 9 12"><defs><linearGradient id="bg1" x1="0" y1="0" x2="0" y2="1"><stop offset="0" stop-color="#f4d000"/><stop offset="1" stop-color="#f08a10"/></linearGradient></defs><path d="M5.6 0.3 L1.8 6.4 L4.4 6.4 L2.6 11.7 L7.4 4.8 L4.9 4.8 Z" fill="url(#bg1)"/></svg>
<div class="t hw" style="left:1026.00px;top:24.36px;font-size:9.70px;color:#1e1e1e;transform:scaleX(0.8784);transform-origin:0 0">Core VIDs</div>
<div class="t hw" style="left:1187.84px;top:24.36px;font-size:9.70px;color:#1e1e1e;transform:scaleX(0.8900);transform-origin:0 0">1.082 V</div>
<div class="t hw" style="left:1253.24px;top:24.36px;font-size:9.70px;color:#1e1e1e;transform:scaleX(0.8900);transform-origin:0 0">0.970 V</div>
<div class="t hw" style="left:1319.24px;top:24.36px;font-size:9.70px;color:#1e1e1e;transform:scaleX(0.8900);transform-origin:0 0">1.310 V</div>
<div class="t hw" style="left:1385.04px;top:24.36px;font-size:9.70px;color:#1e1e1e;transform:scaleX(0.8900);transform-origin:0 0">1.085 V</div>
<div class="abs" style="left:1025.0px;top:36.34px;width:395.6px;height:14px;background:#efefef"></div>
<div class="abs" style="left:1157px;top:36.34px;width:65.7px;height:14px;background:#cce4f7"></div>
<svg class="abs" style="left:997.7px;top:40.3px" width="10" height="6" viewBox="0 0 10 6"><path d="M0.6 0.8 L5 5 L9.4 0.8" fill="none" stroke="#5e5e5e" stroke-width="1.25"/></svg>
<svg class="abs" style="left:1013.5px;top:37.8px" width="10" height="11" viewBox="0 0 10 11"><path d="M8.6 2.3 A4.4 4.4 0 1 0 8.9 8.2" fill="none" stroke="#484848" stroke-width="1.4"/><path d="M5.4 2.9 L4.7 5.8 L6.9 7.4" fill="none" stroke="#3c3c3c" stroke-width="1.25"/></svg>
<div class="t hw" style="left:1026.00px;top:38.33px;font-size:9.70px;color:#1e1e1e;transform:scaleX(0.8670);transform-origin:0 0">Core Clocks</div>
<div class="t hw" style="left:1167.83px;top:38.33px;font-size:9.70px;color:#1e1e1e;transform:scaleX(0.9050);transform-origin:0 0">5,095.0 MHz</div>
<div class="t hw" style="left:1233.23px;top:38.33px;font-size:9.70px;color:#1e1e1e;transform:scaleX(0.9050);transform-origin:0 0">4,653.5 MHz</div>
<div class="t hw" style="left:1299.23px;top:38.33px;font-size:9.70px;color:#1e1e1e;transform:scaleX(0.9050);transform-origin:0 0">5,625.0 MHz</div>
<div class="t hw" style="left:1365.03px;top:38.33px;font-size:9.70px;color:#1e1e1e;transform:scaleX(0.9050);transform-origin:0 0">5,008.7 MHz</div>
<div class="abs" style="left:1157px;top:50.31px;width:65.7px;height:14px;background:#cce4f7"></div>
<svg class="abs" style="left:1013.5px;top:51.8px" width="10" height="11" viewBox="0 0 10 11"><path d="M8.6 2.3 A4.4 4.4 0 1 0 8.9 8.2" fill="none" stroke="#484848" stroke-width="1.4"/><path d="M5.4 2.9 L4.7 5.8 L6.9 7.4" fill="none" stroke="#3c3c3c" stroke-width="1.25"/></svg>
<div class="t hw" style="left:1026.00px;top:52.30px;font-size:9.70px;color:#1e1e1e;transform:scaleX(0.9233);transform-origin:0 0">Core 0 Clock (perf #1)</div>
<div class="t hw" style="left:1167.83px;top:52.30px;font-size:9.70px;color:#1e1e1e;transform:scaleX(0.9050);transform-origin:0 0">5,095.0 MHz</div>
<div class="t hw" style="left:1233.23px;top:52.30px;font-size:9.70px;color:#1e1e1e;transform:scaleX(0.9050);transform-origin:0 0">4,658.2 MHz</div>
<div class="t hw" style="left:1299.23px;top:52.30px;font-size:9.70px;color:#1e1e1e;transform:scaleX(0.9050);transform-origin:0 0">5,625.0 MHz</div>
<div class="t hw" style="left:1365.03px;top:52.30px;font-size:9.70px;color:#1e1e1e;transform:scaleX(0.9050);transform-origin:0 0">5,085.4 MHz</div>
<div class="abs" style="left:1025.0px;top:64.28px;width:395.6px;height:14px;background:#efefef"></div>
<div class="abs" style="left:1157px;top:64.28px;width:65.7px;height:14px;background:#cce4f7"></div>
<svg class="abs" style="left:1013.5px;top:65.8px" width="10" height="11" viewBox="0 0 10 11"><path d="M8.6 2.3 A4.4 4.4 0 1 0 8.9 8.2" fill="none" stroke="#484848" stroke-width="1.4"/><path d="M5.4 2.9 L4.7 5.8 L6.9 7.4" fill="none" stroke="#3c3c3c" stroke-width="1.25"/></svg>
<div class="t hw" style="left:1026.00px;top:66.27px;font-size:9.70px;color:#1e1e1e;transform:scaleX(0.9233);transform-origin:0 0">Core 1 Clock (perf #2)</div>
<div class="t hw" style="left:1167.83px;top:66.27px;font-size:9.70px;color:#1e1e1e;transform:scaleX(0.9050);transform-origin:0 0">5,090.0 MHz</div>
<div class="t hw" style="left:1233.23px;top:66.27px;font-size:9.70px;color:#1e1e1e;transform:scaleX(0.9050);transform-origin:0 0">4,653.5 MHz</div>
<div class="t hw" style="left:1299.23px;top:66.27px;font-size:9.70px;color:#1e1e1e;transform:scaleX(0.9050);transform-origin:0 0">5,625.0 MHz</div>
<div class="t hw" style="left:1365.03px;top:66.27px;font-size:9.70px;color:#1e1e1e;transform:scaleX(0.9050);transform-origin:0 0">5,015.2 MHz</div>
<div class="abs" style="left:1157px;top:78.25px;width:65.7px;height:14px;background:#cce4f7"></div>
<svg class="abs" style="left:1013.5px;top:79.8px" width="10" height="11" viewBox="0 0 10 11"><path d="M8.6 2.3 A4.4 4.4 0 1 0 8.9 8.2" fill="none" stroke="#484848" stroke-width="1.4"/><path d="M5.4 2.9 L4.7 5.8 L6.9 7.4" fill="none" stroke="#3c3c3c" stroke-width="1.25"/></svg>
<div class="t hw" style="left:1026.00px;top:80.24px;font-size:9.70px;color:#1e1e1e;transform:scaleX(0.9233);transform-origin:0 0">Core 2 Clock (perf #5)</div>
<div class="t hw" style="left:1167.83px;top:80.24px;font-size:9.70px;color:#1e1e1e;transform:scaleX(0.9050);transform-origin:0 0">5,095.0 MHz</div>
<div class="t hw" style="left:1233.23px;top:80.24px;font-size:9.70px;color:#1e1e1e;transform:scaleX(0.9050);transform-origin:0 0">4,653.5 MHz</div>
<div class="t hw" style="left:1299.23px;top:80.24px;font-size:9.70px;color:#1e1e1e;transform:scaleX(0.9050);transform-origin:0 0">5,625.0 MHz</div>
<div class="t hw" style="left:1365.03px;top:80.24px;font-size:9.70px;color:#1e1e1e;transform:scaleX(0.9050);transform-origin:0 0">4,972.2 MHz</div>
<div class="abs" style="left:1025.0px;top:92.22px;width:395.6px;height:14px;background:#efefef"></div>
<div class="abs" style="left:1157px;top:92.22px;width:65.7px;height:14px;background:#cce4f7"></div>
<svg class="abs" style="left:1013.5px;top:93.7px" width="10" height="11" viewBox="0 0 10 11"><path d="M8.6 2.3 A4.4 4.4 0 1 0 8.9 8.2" fill="none" stroke="#484848" stroke-width="1.4"/><path d="M5.4 2.9 L4.7 5.8 L6.9 7.4" fill="none" stroke="#3c3c3c" stroke-width="1.25"/></svg>
<div class="t hw" style="left:1026.00px;top:94.21px;font-size:9.70px;color:#1e1e1e;transform:scaleX(0.9233);transform-origin:0 0">Core 3 Clock (perf #4)</div>
<div class="t hw" style="left:1167.83px;top:94.21px;font-size:9.70px;color:#1e1e1e;transform:scaleX(0.9050);transform-origin:0 0">5,100.0 MHz</div>
<div class="t hw" style="left:1233.23px;top:94.21px;font-size:9.70px;color:#1e1e1e;transform:scaleX(0.9050);transform-origin:0 0">4,653.5 MHz</div>
<div class="t hw" style="left:1299.23px;top:94.21px;font-size:9.70px;color:#1e1e1e;transform:scaleX(0.9050);transform-origin:0 0">5,625.0 MHz</div>
<div class="t hw" style="left:1365.03px;top:94.21px;font-size:9.70px;color:#1e1e1e;transform:scaleX(0.9050);transform-origin:0 0">4,979.5 MHz</div>
<div class="abs" style="left:1157px;top:106.19px;width:65.7px;height:14px;background:#cce4f7"></div>
<svg class="abs" style="left:1013.5px;top:107.7px" width="10" height="11" viewBox="0 0 10 11"><path d="M8.6 2.3 A4.4 4.4 0 1 0 8.9 8.2" fill="none" stroke="#484848" stroke-width="1.4"/><path d="M5.4 2.9 L4.7 5.8 L6.9 7.4" fill="none" stroke="#3c3c3c" stroke-width="1.25"/></svg>
<div class="t hw" style="left:1026.00px;top:108.18px;font-size:9.70px;color:#1e1e1e;transform:scaleX(0.9233);transform-origin:0 0">Core 4 Clock (perf #1)</div>
<div class="t hw" style="left:1167.83px;top:108.18px;font-size:9.70px;color:#1e1e1e;transform:scaleX(0.9050);transform-origin:0 0">5,090.0 MHz</div>
<div class="t hw" style="left:1233.23px;top:108.18px;font-size:9.70px;color:#1e1e1e;transform:scaleX(0.9050);transform-origin:0 0">4,658.2 MHz</div>
<div class="t hw" style="left:1299.23px;top:108.18px;font-size:9.70px;color:#1e1e1e;transform:scaleX(0.9050);transform-origin:0 0">5,625.0 MHz</div>
<div class="t hw" style="left:1365.03px;top:108.18px;font-size:9.70px;color:#1e1e1e;transform:scaleX(0.9050);transform-origin:0 0">5,084.8 MHz</div>
<div class="abs" style="left:1025.0px;top:120.16px;width:395.6px;height:14px;background:#efefef"></div>
<div class="abs" style="left:1157px;top:120.16px;width:65.7px;height:14px;background:#cce4f7"></div>
<svg class="abs" style="left:1013.5px;top:121.7px" width="10" height="11" viewBox="0 0 10 11"><path d="M8.6 2.3 A4.4 4.4 0 1 0 8.9 8.2" fill="none" stroke="#484848" stroke-width="1.4"/><path d="M5.4 2.9 L4.7 5.8 L6.9 7.4" fill="none" stroke="#3c3c3c" stroke-width="1.25"/></svg>
<div class="t hw" style="left:1026.00px;top:122.15px;font-size:9.70px;color:#1e1e1e;transform:scaleX(0.9233);transform-origin:0 0">Core 5 Clock (perf #3)</div>
<div class="t hw" style="left:1167.83px;top:122.15px;font-size:9.70px;color:#1e1e1e;transform:scaleX(0.9050);transform-origin:0 0">5,095.0 MHz</div>
<div class="t hw" style="left:1233.23px;top:122.15px;font-size:9.70px;color:#1e1e1e;transform:scaleX(0.9050);transform-origin:0 0">4,657.8 MHz</div>
<div class="t hw" style="left:1299.23px;top:122.15px;font-size:9.70px;color:#1e1e1e;transform:scaleX(0.9050);transform-origin:0 0">5,625.0 MHz</div>
<div class="t hw" style="left:1365.03px;top:122.15px;font-size:9.70px;color:#1e1e1e;transform:scaleX(0.9050);transform-origin:0 0">4,989.4 MHz</div>
<svg class="abs" style="left:1013.5px;top:135.6px" width="10" height="11" viewBox="0 0 10 11"><path d="M8.6 2.3 A4.4 4.4 0 1 0 8.9 8.2" fill="none" stroke="#484848" stroke-width="1.4"/><path d="M5.4 2.9 L4.7 5.8 L6.9 7.4" fill="none" stroke="#3c3c3c" stroke-width="1.25"/></svg>
<div class="t hw" style="left:1026.00px;top:136.12px;font-size:9.70px;color:#1e1e1e;transform:scaleX(0.9233);transform-origin:0 0">Core 6 Clock (perf #6)</div>
<div class="t hw" style="left:1167.83px;top:136.12px;font-size:9.70px;color:#1e1e1e;transform:scaleX(0.9050);transform-origin:0 0">5,095.0 MHz</div>
<div class="t hw" style="left:1233.23px;top:136.12px;font-size:9.70px;color:#1e1e1e;transform:scaleX(0.9050);transform-origin:0 0">4,657.8 MHz</div>
<div class="t hw" style="left:1299.23px;top:136.12px;font-size:9.70px;color:#1e1e1e;transform:scaleX(0.9050);transform-origin:0 0">5,625.0 MHz</div>
<div class="t hw" style="left:1365.03px;top:136.12px;font-size:9.70px;color:#1e1e1e;transform:scaleX(0.9050);transform-origin:0 0">4,966.8 MHz</div>
<div class="abs" style="left:1025.0px;top:148.10px;width:395.6px;height:14px;background:#efefef"></div>
<div class="abs" style="left:1157px;top:148.10px;width:65.7px;height:14px;background:#cce4f7"></div>
<svg class="abs" style="left:1013.5px;top:149.6px" width="10" height="11" viewBox="0 0 10 11"><path d="M8.6 2.3 A4.4 4.4 0 1 0 8.9 8.2" fill="none" stroke="#484848" stroke-width="1.4"/><path d="M5.4 2.9 L4.7 5.8 L6.9 7.4" fill="none" stroke="#3c3c3c" stroke-width="1.25"/></svg>
<div class="t hw" style="left:1026.00px;top:150.09px;font-size:9.70px;color:#1e1e1e;transform:scaleX(0.9275);transform-origin:0 0">Core 7 Clock (perf #7)</div>
<div class="t hw" style="left:1167.83px;top:150.09px;font-size:9.70px;color:#1e1e1e;transform:scaleX(0.9050);transform-origin:0 0">5,100.0 MHz</div>
<div class="t hw" style="left:1233.23px;top:150.09px;font-size:9.70px;color:#1e1e1e;transform:scaleX(0.9050);transform-origin:0 0">4,658.2 MHz</div>
<div class="t hw" style="left:1299.23px;top:150.09px;font-size:9.70px;color:#1e1e1e;transform:scaleX(0.9050);transform-origin:0 0">5,625.0 MHz</div>
<div class="t hw" style="left:1365.03px;top:150.09px;font-size:9.70px;color:#1e1e1e;transform:scaleX(0.9050);transform-origin:0 0">4,976.3 MHz</div>
<svg class="abs" style="left:1000.5px;top:163.6px" width="10" height="11" viewBox="0 0 10 11"><path d="M8.6 2.3 A4.4 4.4 0 1 0 8.9 8.2" fill="none" stroke="#484848" stroke-width="1.4"/><path d="M5.4 2.9 L4.7 5.8 L6.9 7.4" fill="none" stroke="#3c3c3c" stroke-width="1.25"/></svg>
<div class="t hw" style="left:1013.00px;top:164.06px;font-size:9.70px;color:#1e1e1e;transform:scaleX(0.8451);transform-origin:0 0">Bus Clock</div>
<div class="t hw" style="left:1175.15px;top:164.06px;font-size:9.70px;color:#1e1e1e;transform:scaleX(0.9050);transform-origin:0 0">100.0 MHz</div>
<div class="t hw" style="left:1240.55px;top:164.06px;font-size:9.70px;color:#1e1e1e;transform:scaleX(0.9050);transform-origin:0 0">100.0 MHz</div>
<div class="t hw" style="left:1306.55px;top:164.06px;font-size:9.70px;color:#1e1e1e;transform:scaleX(0.9050);transform-origin:0 0">100.0 MHz</div>
<div class="t hw" style="left:1372.35px;top:164.06px;font-size:9.70px;color:#1e1e1e;transform:scaleX(0.9050);transform-origin:0 0">100.0 MHz</div>
<div class="abs" style="left:1025.0px;top:176.04px;width:395.6px;height:14px;background:#efefef"></div>
<div class="abs" style="left:1157px;top:176.04px;width:65.7px;height:14px;background:#cce4f7"></div>
<svg class="abs" style="left:1000.0px;top:178.0px" width="6" height="10" viewBox="0 0 6 10"><path d="M0.8 0.8 L4.8 5 L0.8 9.2" fill="none" stroke="#5e5e5e" stroke-width="1.25"/></svg>
<svg class="abs" style="left:1013.5px;top:177.5px" width="10" height="11" viewBox="0 0 10 11"><path d="M8.6 2.3 A4.4 4.4 0 1 0 8.9 8.2" fill="none" stroke="#484848" stroke-width="1.4"/><path d="M5.4 2.9 L4.7 5.8 L6.9 7.4" fill="none" stroke="#3c3c3c" stroke-width="1.25"/></svg>
<div class="t hw" style="left:1026.00px;top:178.03px;font-size:9.70px;color:#1e1e1e;transform:scaleX(0.9012);transform-origin:0 0">Core Effective Clocks</div>
<div class="t hw" style="left:1167.83px;top:178.03px;font-size:9.70px;color:#1e1e1e;transform:scaleX(0.9050);transform-origin:0 0">5,068.4 MHz</div>
<div class="t hw" style="left:1250.32px;top:178.03px;font-size:9.70px;color:#1e1e1e;transform:scaleX(0.9050);transform-origin:0 0">3.9 MHz</div>
<div class="t hw" style="left:1299.23px;top:178.03px;font-size:9.70px;color:#1e1e1e;transform:scaleX(0.9050);transform-origin:0 0">5,633.6 MHz</div>
<div class="t hw" style="left:1365.03px;top:178.03px;font-size:9.70px;color:#1e1e1e;transform:scaleX(0.9050);transform-origin:0 0">3,591.3 MHz</div>
<div class="abs" style="left:1157px;top:190.01px;width:65.7px;height:14px;background:#cce4f7"></div>
<svg class="abs" style="left:1000.5px;top:191.5px" width="10" height="11" viewBox="0 0 10 11"><path d="M8.6 2.3 A4.4 4.4 0 1 0 8.9 8.2" fill="none" stroke="#484848" stroke-width="1.4"/><path d="M5.4 2.9 L4.7 5.8 L6.9 7.4" fill="none" stroke="#3c3c3c" stroke-width="1.25"/></svg>
<div class="t hw" style="left:1013.00px;top:192.00px;font-size:9.70px;color:#1e1e1e;transform:scaleX(0.9179);transform-origin:0 0">Average Effective Clock</div>
<div class="t hw" style="left:1167.83px;top:192.00px;font-size:9.70px;color:#1e1e1e;transform:scaleX(0.9050);transform-origin:0 0">5,068.4 MHz</div>
<div class="t hw" style="left:1240.55px;top:192.00px;font-size:9.70px;color:#1e1e1e;transform:scaleX(0.9050);transform-origin:0 0">120.7 MHz</div>
<div class="t hw" style="left:1299.23px;top:192.00px;font-size:9.70px;color:#1e1e1e;transform:scaleX(0.9050);transform-origin:0 0">5,206.3 MHz</div>
<div class="t hw" style="left:1365.03px;top:192.00px;font-size:9.70px;color:#1e1e1e;transform:scaleX(0.9050);transform-origin:0 0">3,591.3 MHz</div>
<div class="abs" style="left:1025.0px;top:203.98px;width:395.6px;height:14px;background:#efefef"></div>
<svg class="abs" style="left:1000.0px;top:206.0px" width="6" height="10" viewBox="0 0 6 10"><path d="M0.8 0.8 L4.8 5 L0.8 9.2" fill="none" stroke="#5e5e5e" stroke-width="1.25"/></svg>
<svg class="abs" style="left:1013.5px;top:205.5px" width="10" height="11" viewBox="0 0 10 11"><path d="M8.6 2.3 A4.4 4.4 0 1 0 8.9 8.2" fill="none" stroke="#484848" stroke-width="1.4"/><path d="M5.4 2.9 L4.7 5.8 L6.9 7.4" fill="none" stroke="#3c3c3c" stroke-width="1.25"/></svg>
<div class="t hw" style="left:1026.00px;top:205.97px;font-size:9.70px;color:#1e1e1e;transform:scaleX(0.8810);transform-origin:0 0">Core Usage</div>
<div class="t hw" style="left:1184.50px;top:205.97px;font-size:9.70px;color:#1e1e1e;transform:scaleX(0.9300);transform-origin:0 0">100.0 %</div>
<div class="t hw" style="left:1259.93px;top:205.97px;font-size:9.70px;color:#1e1e1e;transform:scaleX(0.9300);transform-origin:0 0">0.0 %</div>
<div class="t hw" style="left:1315.90px;top:205.97px;font-size:9.70px;color:#1e1e1e;transform:scaleX(0.9300);transform-origin:0 0">100.0 %</div>
<div class="t hw" style="left:1386.72px;top:205.97px;font-size:9.70px;color:#1e1e1e;transform:scaleX(0.9300);transform-origin:0 0">70.5 %</div>
<svg class="abs" style="left:1000.5px;top:219.5px" width="10" height="11" viewBox="0 0 10 11"><path d="M8.6 2.3 A4.4 4.4 0 1 0 8.9 8.2" fill="none" stroke="#484848" stroke-width="1.4"/><path d="M5.4 2.9 L4.7 5.8 L6.9 7.4" fill="none" stroke="#3c3c3c" stroke-width="1.25"/></svg>
<div class="t hw" style="left:1013.00px;top:219.94px;font-size:9.70px;color:#1e1e1e;transform:scaleX(0.8830);transform-origin:0 0">Max CPU/Thread Usage</div>
<div class="t hw" style="left:1184.50px;top:219.94px;font-size:9.70px;color:#1e1e1e;transform:scaleX(0.9300);transform-origin:0 0">100.0 %</div>
<div class="t hw" style="left:1259.93px;top:219.94px;font-size:9.70px;color:#1e1e1e;transform:scaleX(0.9300);transform-origin:0 0">8.5 %</div>
<div class="t hw" style="left:1315.90px;top:219.94px;font-size:9.70px;color:#1e1e1e;transform:scaleX(0.9300);transform-origin:0 0">100.0 %</div>
<div class="t hw" style="left:1386.72px;top:219.94px;font-size:9.70px;color:#1e1e1e;transform:scaleX(0.9300);transform-origin:0 0">76.4 %</div>
<div class="abs" style="left:1012.0px;top:231.92px;width:408.6px;height:14px;background:#efefef"></div>
<svg class="abs" style="left:1000.5px;top:233.4px" width="10" height="11" viewBox="0 0 10 11"><path d="M8.6 2.3 A4.4 4.4 0 1 0 8.9 8.2" fill="none" stroke="#484848" stroke-width="1.4"/><path d="M5.4 2.9 L4.7 5.8 L6.9 7.4" fill="none" stroke="#3c3c3c" stroke-width="1.25"/></svg>
<div class="t hw" style="left:1013.00px;top:233.91px;font-size:9.70px;color:#1e1e1e;transform:scaleX(0.8764);transform-origin:0 0">Total CPU Usage</div>
<div class="t hw" style="left:1184.50px;top:233.91px;font-size:9.70px;color:#1e1e1e;transform:scaleX(0.9300);transform-origin:0 0">100.0 %</div>
<div class="t hw" style="left:1259.93px;top:233.91px;font-size:9.70px;color:#1e1e1e;transform:scaleX(0.9300);transform-origin:0 0">2.4 %</div>
<div class="t hw" style="left:1315.90px;top:233.91px;font-size:9.70px;color:#1e1e1e;transform:scaleX(0.9300);transform-origin:0 0">100.0 %</div>
<div class="t hw" style="left:1386.72px;top:233.91px;font-size:9.70px;color:#1e1e1e;transform:scaleX(0.9300);transform-origin:0 0">70.5 %</div>
<div class="abs" style="left:1157px;top:245.89px;width:65.7px;height:14px;background:#cce4f7"></div>
<svg class="abs" style="left:1000.0px;top:247.9px" width="6" height="10" viewBox="0 0 6 10"><path d="M0.8 0.8 L4.8 5 L0.8 9.2" fill="none" stroke="#5e5e5e" stroke-width="1.25"/></svg>
<svg class="abs" style="left:1013.5px;top:247.4px" width="10" height="11" viewBox="0 0 10 11"><path d="M8.6 2.3 A4.4 4.4 0 1 0 8.9 8.2" fill="none" stroke="#484848" stroke-width="1.4"/><path d="M5.4 2.9 L4.7 5.8 L6.9 7.4" fill="none" stroke="#3c3c3c" stroke-width="1.25"/></svg>
<div class="t hw" style="left:1026.00px;top:247.88px;font-size:9.70px;color:#1e1e1e;transform:scaleX(0.9150);transform-origin:0 0">Core Utility</div>
<div class="t hw" style="left:1184.50px;top:247.88px;font-size:9.70px;color:#1e1e1e;transform:scaleX(0.9300);transform-origin:0 0">107.8 %</div>
<div class="t hw" style="left:1259.93px;top:247.88px;font-size:9.70px;color:#1e1e1e;transform:scaleX(0.9300);transform-origin:0 0">0.1 %</div>
<div class="t hw" style="left:1316.57px;top:247.88px;font-size:9.70px;color:#1e1e1e;transform:scaleX(0.9300);transform-origin:0 0">119.7 %</div>
<div class="t hw" style="left:1386.72px;top:247.88px;font-size:9.70px;color:#1e1e1e;transform:scaleX(0.9300);transform-origin:0 0">76.4 %</div>
<div class="abs" style="left:1012.0px;top:259.86px;width:408.6px;height:14px;background:#efefef"></div>
<div class="abs" style="left:1157px;top:259.86px;width:65.7px;height:14px;background:#cce4f7"></div>
<svg class="abs" style="left:1000.5px;top:261.4px" width="10" height="11" viewBox="0 0 10 11"><path d="M8.6 2.3 A4.4 4.4 0 1 0 8.9 8.2" fill="none" stroke="#484848" stroke-width="1.4"/><path d="M5.4 2.9 L4.7 5.8 L6.9 7.4" fill="none" stroke="#3c3c3c" stroke-width="1.25"/></svg>
<div class="t hw" style="left:1013.00px;top:261.85px;font-size:9.70px;color:#1e1e1e;transform:scaleX(0.8991);transform-origin:0 0">Total CPU Utility</div>
<div class="t hw" style="left:1184.50px;top:261.85px;font-size:9.70px;color:#1e1e1e;transform:scaleX(0.9300);transform-origin:0 0">107.8 %</div>
<div class="t hw" style="left:1259.93px;top:261.85px;font-size:9.70px;color:#1e1e1e;transform:scaleX(0.9300);transform-origin:0 0">3.1 %</div>
<div class="t hw" style="left:1315.90px;top:261.85px;font-size:9.70px;color:#1e1e1e;transform:scaleX(0.9300);transform-origin:0 0">108.2 %</div>
<div class="t hw" style="left:1386.72px;top:261.85px;font-size:9.70px;color:#1e1e1e;transform:scaleX(0.9300);transform-origin:0 0">76.4 %</div>
<div class="abs" style="left:1157px;top:273.83px;width:65.7px;height:14px;background:#cce4f7"></div>
<svg class="abs" style="left:1000.0px;top:275.8px" width="6" height="10" viewBox="0 0 6 10"><path d="M0.8 0.8 L4.8 5 L0.8 9.2" fill="none" stroke="#5e5e5e" stroke-width="1.25"/></svg>
<svg class="abs" style="left:1013.5px;top:275.3px" width="10" height="11" viewBox="0 0 10 11"><path d="M8.6 2.3 A4.4 4.4 0 1 0 8.9 8.2" fill="none" stroke="#484848" stroke-width="1.4"/><path d="M5.4 2.9 L4.7 5.8 L6.9 7.4" fill="none" stroke="#3c3c3c" stroke-width="1.25"/></svg>
<div class="t hw" style="left:1026.00px;top:275.82px;font-size:9.70px;color:#1e1e1e;transform:scaleX(0.8904);transform-origin:0 0">Core Ratios</div>
<div class="t hw" style="left:1192.50px;top:275.82px;font-size:9.70px;color:#1e1e1e;transform:scaleX(0.9500);transform-origin:0 0">51.0 x</div>
<div class="t hw" style="left:1257.90px;top:275.82px;font-size:9.70px;color:#1e1e1e;transform:scaleX(0.9500);transform-origin:0 0">46.5 x</div>
<div class="t hw" style="left:1323.90px;top:275.82px;font-size:9.70px;color:#1e1e1e;transform:scaleX(0.9500);transform-origin:0 0">56.2 x</div>
<div class="t hw" style="left:1389.70px;top:275.82px;font-size:9.70px;color:#1e1e1e;transform:scaleX(0.9500);transform-origin:0 0">50.1 x</div>
<div class="abs" style="left:1011.4px;top:287.80px;width:409.2px;height:14px;background:#efefef"></div>
<div class="abs" style="left:1012px;top:301.77px;width:408.6px;height:13px;background:#dcdcdc"></div>
<svg class="abs" style="left:984.6px;top:305.8px" width="10" height="6" viewBox="0 0 10 6"><path d="M0.6 0.8 L5 5 L9.4 0.8" fill="none" stroke="#5e5e5e" stroke-width="1.25"/></svg>
<div class="abs" style="left:1001.3px;top:303.1px;width:7px;height:11px;background:linear-gradient(90deg,#3a3a3a,#6a6a6a 50%,#3a3a3a);border-radius:1px"></div>
<div class="t" style="left:1013.30px;top:303.59px;font-size:9.90px;color:#111;transform:scaleX(0.9799);transform-origin:0 0;font-weight:bold">CPU [#0]: AMD Ryzen 7 9850X3D: C-State Residency</div>
<div class="abs" style="left:1012.0px;top:315.74px;width:408.6px;height:14px;background:#efefef"></div>
<svg class="abs" style="left:1000.5px;top:317.2px" width="10" height="11" viewBox="0 0 10 11"><path d="M8.6 2.3 A4.4 4.4 0 1 0 8.9 8.2" fill="none" stroke="#484848" stroke-width="1.4"/><path d="M5.4 2.9 L4.7 5.8 L6.9 7.4" fill="none" stroke="#3c3c3c" stroke-width="1.25"/></svg>
<div class="t hw" style="left:1013.00px;top:317.73px;font-size:9.70px;color:#1e1e1e;transform:scaleX(0.8718);transform-origin:0 0">Package C6 Residency</div>
<div class="t hw" style="left:1194.53px;top:317.73px;font-size:9.70px;color:#1e1e1e;transform:scaleX(0.9300);transform-origin:0 0">0.0 %</div>
<div class="t hw" style="left:1259.93px;top:317.73px;font-size:9.70px;color:#1e1e1e;transform:scaleX(0.9300);transform-origin:0 0">0.0 %</div>
<div class="t hw" style="left:1320.92px;top:317.73px;font-size:9.70px;color:#1e1e1e;transform:scaleX(0.9300);transform-origin:0 0">61.8 %</div>
<div class="t hw" style="left:1391.73px;top:317.73px;font-size:9.70px;color:#1e1e1e;transform:scaleX(0.9300);transform-origin:0 0">8.0 %</div>
<svg class="abs" style="left:1000.0px;top:331.7px" width="6" height="10" viewBox="0 0 6 10"><path d="M0.8 0.8 L4.8 5 L0.8 9.2" fill="none" stroke="#5e5e5e" stroke-width="1.25"/></svg>
<svg class="abs" style="left:1013.5px;top:331.2px" width="10" height="11" viewBox="0 0 10 11"><path d="M8.6 2.3 A4.4 4.4 0 1 0 8.9 8.2" fill="none" stroke="#484848" stroke-width="1.4"/><path d="M5.4 2.9 L4.7 5.8 L6.9 7.4" fill="none" stroke="#3c3c3c" stroke-width="1.25"/></svg>
<div class="t hw" style="left:1026.00px;top:331.70px;font-size:9.70px;color:#1e1e1e;transform:scaleX(0.8834);transform-origin:0 0">Core C0 Residency</div>
<div class="t hw" style="left:1184.50px;top:331.70px;font-size:9.70px;color:#1e1e1e;transform:scaleX(0.9300);transform-origin:0 0">100.0 %</div>
<div class="t hw" style="left:1259.93px;top:331.70px;font-size:9.70px;color:#1e1e1e;transform:scaleX(0.9300);transform-origin:0 0">0.0 %</div>
<div class="t hw" style="left:1315.90px;top:331.70px;font-size:9.70px;color:#1e1e1e;transform:scaleX(0.9300);transform-origin:0 0">100.0 %</div>
<div class="t hw" style="left:1386.72px;top:331.70px;font-size:9.70px;color:#1e1e1e;transform:scaleX(0.9300);transform-origin:0 0">70.8 %</div>
<div class="abs" style="left:1025.0px;top:343.68px;width:395.6px;height:14px;background:#efefef"></div>
<svg class="abs" style="left:1000.0px;top:345.7px" width="6" height="10" viewBox="0 0 6 10"><path d="M0.8 0.8 L4.8 5 L0.8 9.2" fill="none" stroke="#5e5e5e" stroke-width="1.25"/></svg>
<svg class="abs" style="left:1013.5px;top:345.2px" width="10" height="11" viewBox="0 0 10 11"><path d="M8.6 2.3 A4.4 4.4 0 1 0 8.9 8.2" fill="none" stroke="#484848" stroke-width="1.4"/><path d="M5.4 2.9 L4.7 5.8 L6.9 7.4" fill="none" stroke="#3c3c3c" stroke-width="1.25"/></svg>
<div class="t hw" style="left:1026.00px;top:345.67px;font-size:9.70px;color:#1e1e1e;transform:scaleX(0.8834);transform-origin:0 0">Core C1 Residency</div>
<div class="t hw" style="left:1194.53px;top:345.67px;font-size:9.70px;color:#1e1e1e;transform:scaleX(0.9300);transform-origin:0 0">0.0 %</div>
<div class="t hw" style="left:1259.93px;top:345.67px;font-size:9.70px;color:#1e1e1e;transform:scaleX(0.9300);transform-origin:0 0">0.0 %</div>
<div class="t hw" style="left:1320.92px;top:345.67px;font-size:9.70px;color:#1e1e1e;transform:scaleX(0.9300);transform-origin:0 0">96.6 %</div>
<div class="t hw" style="left:1391.73px;top:345.67px;font-size:9.70px;color:#1e1e1e;transform:scaleX(0.9300);transform-origin:0 0">3.9 %</div>
<svg class="abs" style="left:1000.0px;top:359.6px" width="6" height="10" viewBox="0 0 6 10"><path d="M0.8 0.8 L4.8 5 L0.8 9.2" fill="none" stroke="#5e5e5e" stroke-width="1.25"/></svg>
<svg class="abs" style="left:1013.5px;top:359.1px" width="10" height="11" viewBox="0 0 10 11"><path d="M8.6 2.3 A4.4 4.4 0 1 0 8.9 8.2" fill="none" stroke="#484848" stroke-width="1.4"/><path d="M5.4 2.9 L4.7 5.8 L6.9 7.4" fill="none" stroke="#3c3c3c" stroke-width="1.25"/></svg>
<div class="t hw" style="left:1026.00px;top:359.64px;font-size:9.70px;color:#1e1e1e;transform:scaleX(0.8834);transform-origin:0 0">Core C6 Residency</div>
<div class="t hw" style="left:1194.53px;top:359.64px;font-size:9.70px;color:#1e1e1e;transform:scaleX(0.9300);transform-origin:0 0">0.0 %</div>
<div class="t hw" style="left:1259.93px;top:359.64px;font-size:9.70px;color:#1e1e1e;transform:scaleX(0.9300);transform-origin:0 0">0.0 %</div>
<div class="t hw" style="left:1320.92px;top:359.64px;font-size:9.70px;color:#1e1e1e;transform:scaleX(0.9300);transform-origin:0 0">99.9 %</div>
<div class="t hw" style="left:1386.72px;top:359.64px;font-size:9.70px;color:#1e1e1e;transform:scaleX(0.9300);transform-origin:0 0">25.3 %</div>
<div class="abs" style="left:1011.4px;top:371.62px;width:409.2px;height:14px;background:#efefef"></div>
<div class="abs" style="left:1012px;top:385.59px;width:408.6px;height:13px;background:#dcdcdc"></div>
<svg class="abs" style="left:984.6px;top:389.6px" width="10" height="6" viewBox="0 0 10 6"><path d="M0.6 0.8 L5 5 L9.4 0.8" fill="none" stroke="#5e5e5e" stroke-width="1.25"/></svg>
<div class="abs" style="left:1001.3px;top:386.9px;width:7px;height:11px;background:linear-gradient(90deg,#3a3a3a,#6a6a6a 50%,#3a3a3a);border-radius:1px"></div>
<div class="t" style="left:1013.30px;top:387.41px;font-size:9.90px;color:#111;transform:scaleX(0.9798);transform-origin:0 0;font-weight:bold">Memory Timings</div>
<div class="abs" style="left:1012.0px;top:399.56px;width:408.6px;height:14px;background:#efefef"></div>
<svg class="abs" style="left:1000.5px;top:401.1px" width="10" height="11" viewBox="0 0 10 11"><path d="M8.6 2.3 A4.4 4.4 0 1 0 8.9 8.2" fill="none" stroke="#484848" stroke-width="1.4"/><path d="M5.4 2.9 L4.7 5.8 L6.9 7.4" fill="none" stroke="#3c3c3c" stroke-width="1.25"/></svg>
<div class="t hw" style="left:1013.00px;top:401.55px;font-size:9.70px;color:#1e1e1e;transform:scaleX(0.8745);transform-origin:0 0">Memory Clock</div>
<div class="t hw" style="left:1167.83px;top:401.55px;font-size:9.70px;color:#1e1e1e;transform:scaleX(0.9050);transform-origin:0 0">3,000.0 MHz</div>
<div class="t hw" style="left:1233.23px;top:401.55px;font-size:9.70px;color:#1e1e1e;transform:scaleX(0.9050);transform-origin:0 0">3,000.0 MHz</div>
<div class="t hw" style="left:1299.23px;top:401.55px;font-size:9.70px;color:#1e1e1e;transform:scaleX(0.9050);transform-origin:0 0">3,000.0 MHz</div>
<div class="t hw" style="left:1365.03px;top:401.55px;font-size:9.70px;color:#1e1e1e;transform:scaleX(0.9050);transform-origin:0 0">3,000.0 MHz</div>
<svg class="abs" style="left:1000.5px;top:415.0px" width="10" height="11" viewBox="0 0 10 11"><path d="M8.6 2.3 A4.4 4.4 0 1 0 8.9 8.2" fill="none" stroke="#484848" stroke-width="1.4"/><path d="M5.4 2.9 L4.7 5.8 L6.9 7.4" fill="none" stroke="#3c3c3c" stroke-width="1.25"/></svg>
<div class="t hw" style="left:1013.00px;top:415.52px;font-size:9.70px;color:#1e1e1e;transform:scaleX(0.8807);transform-origin:0 0">Memory Clock Ratio</div>
<div class="t hw" style="left:1187.37px;top:415.52px;font-size:9.70px;color:#1e1e1e;transform:scaleX(0.9500);transform-origin:0 0">30.00 x</div>
<div class="t hw" style="left:1252.77px;top:415.52px;font-size:9.70px;color:#1e1e1e;transform:scaleX(0.9500);transform-origin:0 0">30.00 x</div>
<div class="t hw" style="left:1318.77px;top:415.52px;font-size:9.70px;color:#1e1e1e;transform:scaleX(0.9500);transform-origin:0 0">30.00 x</div>
<div class="t hw" style="left:1384.57px;top:415.52px;font-size:9.70px;color:#1e1e1e;transform:scaleX(0.9500);transform-origin:0 0">30.00 x</div>
<div class="abs" style="left:1012.0px;top:427.50px;width:408.6px;height:14px;background:#efefef"></div>
<svg class="abs" style="left:1000.5px;top:429.0px" width="10" height="11" viewBox="0 0 10 11"><path d="M8.6 2.3 A4.4 4.4 0 1 0 8.9 8.2" fill="none" stroke="#484848" stroke-width="1.4"/><path d="M5.4 2.9 L4.7 5.8 L6.9 7.4" fill="none" stroke="#3c3c3c" stroke-width="1.25"/></svg>
<div class="t hw" style="left:1013.00px;top:429.49px;font-size:9.70px;color:#1e1e1e;transform:scaleX(0.8824);transform-origin:0 0">Tcas</div>
<div class="t hw" style="left:1200.77px;top:429.49px;font-size:9.70px;color:#1e1e1e;transform:scaleX(0.8750);transform-origin:0 0">30 T</div>
<div class="t hw" style="left:1266.17px;top:429.49px;font-size:9.70px;color:#1e1e1e;transform:scaleX(0.8750);transform-origin:0 0">30 T</div>
<div class="t hw" style="left:1332.17px;top:429.49px;font-size:9.70px;color:#1e1e1e;transform:scaleX(0.8750);transform-origin:0 0">30 T</div>
<svg class="abs" style="left:1000.5px;top:443.0px" width="10" height="11" viewBox="0 0 10 11"><path d="M8.6 2.3 A4.4 4.4 0 1 0 8.9 8.2" fill="none" stroke="#484848" stroke-width="1.4"/><path d="M5.4 2.9 L4.7 5.8 L6.9 7.4" fill="none" stroke="#3c3c3c" stroke-width="1.25"/></svg>
<div class="t hw" style="left:1013.00px;top:443.46px;font-size:9.70px;color:#1e1e1e;transform:scaleX(0.8928);transform-origin:0 0">Trcd</div>
<div class="t hw" style="left:1200.77px;top:443.46px;font-size:9.70px;color:#1e1e1e;transform:scaleX(0.8750);transform-origin:0 0">38 T</div>
<div class="t hw" style="left:1266.17px;top:443.46px;font-size:9.70px;color:#1e1e1e;transform:scaleX(0.8750);transform-origin:0 0">38 T</div>
<div class="t hw" style="left:1332.17px;top:443.46px;font-size:9.70px;color:#1e1e1e;transform:scaleX(0.8750);transform-origin:0 0">38 T</div>
<div class="abs" style="left:1012.0px;top:455.44px;width:408.6px;height:14px;background:#efefef"></div>
<svg class="abs" style="left:1000.5px;top:456.9px" width="10" height="11" viewBox="0 0 10 11"><path d="M8.6 2.3 A4.4 4.4 0 1 0 8.9 8.2" fill="none" stroke="#484848" stroke-width="1.4"/><path d="M5.4 2.9 L4.7 5.8 L6.9 7.4" fill="none" stroke="#3c3c3c" stroke-width="1.25"/></svg>
<div class="t hw" style="left:1013.00px;top:457.43px;font-size:9.70px;color:#1e1e1e;transform:scaleX(0.9091);transform-origin:0 0">Trp</div>
<div class="t hw" style="left:1200.77px;top:457.43px;font-size:9.70px;color:#1e1e1e;transform:scaleX(0.8750);transform-origin:0 0">38 T</div>
<div class="t hw" style="left:1266.17px;top:457.43px;font-size:9.70px;color:#1e1e1e;transform:scaleX(0.8750);transform-origin:0 0">38 T</div>
<div class="t hw" style="left:1332.17px;top:457.43px;font-size:9.70px;color:#1e1e1e;transform:scaleX(0.8750);transform-origin:0 0">38 T</div>
<svg class="abs" style="left:1000.5px;top:470.9px" width="10" height="11" viewBox="0 0 10 11"><path d="M8.6 2.3 A4.4 4.4 0 1 0 8.9 8.2" fill="none" stroke="#484848" stroke-width="1.4"/><path d="M5.4 2.9 L4.7 5.8 L6.9 7.4" fill="none" stroke="#3c3c3c" stroke-width="1.25"/></svg>
<div class="t hw" style="left:1013.00px;top:471.40px;font-size:9.70px;color:#1e1e1e;transform:scaleX(0.8928);transform-origin:0 0">Tras</div>
<div class="t hw" style="left:1200.77px;top:471.40px;font-size:9.70px;color:#1e1e1e;transform:scaleX(0.8750);transform-origin:0 0">96 T</div>
<div class="t hw" style="left:1266.17px;top:471.40px;font-size:9.70px;color:#1e1e1e;transform:scaleX(0.8750);transform-origin:0 0">96 T</div>
<div class="t hw" style="left:1332.17px;top:471.40px;font-size:9.70px;color:#1e1e1e;transform:scaleX(0.8750);transform-origin:0 0">96 T</div>
<div class="abs" style="left:1012.0px;top:483.38px;width:408.6px;height:14px;background:#efefef"></div>
<svg class="abs" style="left:1000.5px;top:484.9px" width="10" height="11" viewBox="0 0 10 11"><path d="M8.6 2.3 A4.4 4.4 0 1 0 8.9 8.2" fill="none" stroke="#484848" stroke-width="1.4"/><path d="M5.4 2.9 L4.7 5.8 L6.9 7.4" fill="none" stroke="#3c3c3c" stroke-width="1.25"/></svg>
<div class="t hw" style="left:1013.00px;top:485.37px;font-size:9.70px;color:#1e1e1e;transform:scaleX(0.9014);transform-origin:0 0">Trc</div>
<div class="t hw" style="left:1196.05px;top:485.37px;font-size:9.70px;color:#1e1e1e;transform:scaleX(0.8750);transform-origin:0 0">134 T</div>
<div class="t hw" style="left:1261.45px;top:485.37px;font-size:9.70px;color:#1e1e1e;transform:scaleX(0.8750);transform-origin:0 0">134 T</div>
<div class="t hw" style="left:1327.45px;top:485.37px;font-size:9.70px;color:#1e1e1e;transform:scaleX(0.8750);transform-origin:0 0">134 T</div>
<svg class="abs" style="left:1000.5px;top:498.9px" width="10" height="11" viewBox="0 0 10 11"><path d="M8.6 2.3 A4.4 4.4 0 1 0 8.9 8.2" fill="none" stroke="#484848" stroke-width="1.4"/><path d="M5.4 2.9 L4.7 5.8 L6.9 7.4" fill="none" stroke="#3c3c3c" stroke-width="1.25"/></svg>
<div class="t hw" style="left:1013.00px;top:499.34px;font-size:9.70px;color:#1e1e1e;transform:scaleX(0.9424);transform-origin:0 0">Trfc</div>
<div class="t hw" style="left:1196.05px;top:499.34px;font-size:9.70px;color:#1e1e1e;transform:scaleX(0.8750);transform-origin:0 0">884 T</div>
<div class="t hw" style="left:1261.45px;top:499.34px;font-size:9.70px;color:#1e1e1e;transform:scaleX(0.8750);transform-origin:0 0">884 T</div>
<div class="t hw" style="left:1327.45px;top:499.34px;font-size:9.70px;color:#1e1e1e;transform:scaleX(0.8750);transform-origin:0 0">884 T</div>
<div class="abs" style="left:1012.0px;top:511.32px;width:408.6px;height:14px;background:#efefef"></div>
<svg class="abs" style="left:1000.5px;top:512.8px" width="10" height="11" viewBox="0 0 10 11"><path d="M8.6 2.3 A4.4 4.4 0 1 0 8.9 8.2" fill="none" stroke="#484848" stroke-width="1.4"/><path d="M5.4 2.9 L4.7 5.8 L6.9 7.4" fill="none" stroke="#3c3c3c" stroke-width="1.25"/></svg>
<div class="t hw" style="left:1013.00px;top:513.31px;font-size:9.70px;color:#1e1e1e;transform:scaleX(0.8759);transform-origin:0 0">Command Rate</div>
<div class="t hw" style="left:1205.49px;top:513.31px;font-size:9.70px;color:#1e1e1e;transform:scaleX(0.8750);transform-origin:0 0">1 T</div>
<div class="t hw" style="left:1270.89px;top:513.31px;font-size:9.70px;color:#1e1e1e;transform:scaleX(0.8750);transform-origin:0 0">1 T</div>
<div class="t hw" style="left:1336.89px;top:513.31px;font-size:9.70px;color:#1e1e1e;transform:scaleX(0.8750);transform-origin:0 0">1 T</div>
<div class="abs" style="left:1012px;top:539.26px;width:408.6px;height:13px;background:#dcdcdc"></div>
<svg class="abs" style="left:984.6px;top:543.3px" width="10" height="6" viewBox="0 0 10 6"><path d="M0.6 0.8 L5 5 L9.4 0.8" fill="none" stroke="#5e5e5e" stroke-width="1.25"/></svg>
<div class="abs" style="left:1001.3px;top:540.6px;width:7px;height:11px;background:linear-gradient(90deg,#3a3a3a,#6a6a6a 50%,#3a3a3a);border-radius:1px"></div>
<div class="t" style="left:1013.30px;top:541.08px;font-size:9.90px;color:#111;transform:scaleX(0.9679);transform-origin:0 0;font-weight:bold">CPU [#0]: AMD Ryzen 7 9850X3D: Enhanced</div>
<div class="abs" style="left:1157px;top:553.23px;width:65.7px;height:14px;background:#cce4f7"></div>
<svg class="abs" style="left:1001.5px;top:554.7px" width="6" height="11" viewBox="0 0 6 11"><rect x="2.2" y="0.5" width="1.6" height="7" fill="#d02020"/><circle cx="3" cy="8.6" r="1.9" fill="#c81818"/></svg>
<div class="t hw" style="left:1013.00px;top:555.22px;font-size:9.70px;color:#1e1e1e;transform:scaleX(0.8897);transform-origin:0 0">CPU (Tctl/Tdie)</div>
<div class="t hw" style="left:1187.09px;top:555.22px;font-size:9.70px;color:#1e1e1e;transform:scaleX(0.9400);transform-origin:0 0">83.0 °C</div>
<div class="t hw" style="left:1252.49px;top:555.22px;font-size:9.70px;color:#1e1e1e;transform:scaleX(0.9400);transform-origin:0 0">36.1 °C</div>
<div class="t hw" style="left:1318.49px;top:555.22px;font-size:9.70px;color:#1e1e1e;transform:scaleX(0.9400);transform-origin:0 0">83.1 °C</div>
<div class="t hw" style="left:1384.29px;top:555.22px;font-size:9.70px;color:#1e1e1e;transform:scaleX(0.9400);transform-origin:0 0">68.1 °C</div>
<div class="abs" style="left:1012.0px;top:567.20px;width:408.6px;height:14px;background:#efefef"></div>
<div class="abs" style="left:1157px;top:567.20px;width:65.7px;height:14px;background:#cce4f7"></div>
<svg class="abs" style="left:1001.5px;top:568.7px" width="6" height="11" viewBox="0 0 6 11"><rect x="2.2" y="0.5" width="1.6" height="7" fill="#d02020"/><circle cx="3" cy="8.6" r="1.9" fill="#c81818"/></svg>
<div class="t hw" style="left:1013.00px;top:569.19px;font-size:9.70px;color:#1e1e1e;transform:scaleX(0.8885);transform-origin:0 0">CPU Die (average)</div>
<div class="t hw" style="left:1187.09px;top:569.19px;font-size:9.70px;color:#1e1e1e;transform:scaleX(0.9400);transform-origin:0 0">82.8 °C</div>
<div class="t hw" style="left:1252.49px;top:569.19px;font-size:9.70px;color:#1e1e1e;transform:scaleX(0.9400);transform-origin:0 0">34.2 °C</div>
<div class="t hw" style="left:1318.49px;top:569.19px;font-size:9.70px;color:#1e1e1e;transform:scaleX(0.9400);transform-origin:0 0">83.2 °C</div>
<div class="t hw" style="left:1384.29px;top:569.19px;font-size:9.70px;color:#1e1e1e;transform:scaleX(0.9400);transform-origin:0 0">66.7 °C</div>
<div class="abs" style="left:1157px;top:581.17px;width:65.7px;height:14px;background:#cce4f7"></div>
<svg class="abs" style="left:1001.5px;top:582.7px" width="6" height="11" viewBox="0 0 6 11"><rect x="2.2" y="0.5" width="1.6" height="7" fill="#d02020"/><circle cx="3" cy="8.6" r="1.9" fill="#c81818"/></svg>
<div class="t hw" style="left:1013.00px;top:583.16px;font-size:9.70px;color:#1e1e1e;transform:scaleX(0.8478);transform-origin:0 0">CPU CCD1 (Tdie)</div>
<div class="t hw" style="left:1187.09px;top:583.16px;font-size:9.70px;color:#1e1e1e;transform:scaleX(0.9400);transform-origin:0 0">82.8 °C</div>
<div class="t hw" style="left:1252.49px;top:583.16px;font-size:9.70px;color:#1e1e1e;transform:scaleX(0.9400);transform-origin:0 0">29.1 °C</div>
<div class="t hw" style="left:1318.49px;top:583.16px;font-size:9.70px;color:#1e1e1e;transform:scaleX(0.9400);transform-origin:0 0">85.1 °C</div>
<div class="t hw" style="left:1384.29px;top:583.16px;font-size:9.70px;color:#1e1e1e;transform:scaleX(0.9400);transform-origin:0 0">65.6 °C</div>
<div class="abs" style="left:1025.0px;top:595.14px;width:395.6px;height:14px;background:#efefef"></div>
<svg class="abs" style="left:1000.0px;top:597.1px" width="6" height="10" viewBox="0 0 6 10"><path d="M0.8 0.8 L4.8 5 L0.8 9.2" fill="none" stroke="#5e5e5e" stroke-width="1.25"/></svg>
<svg class="abs" style="left:1014.5px;top:596.6px" width="6" height="11" viewBox="0 0 6 11"><rect x="2.2" y="0.5" width="1.6" height="7" fill="#d02020"/><circle cx="3" cy="8.6" r="1.9" fill="#c81818"/></svg>
<div class="t hw" style="left:1026.00px;top:597.13px;font-size:9.70px;color:#1e1e1e;transform:scaleX(0.9210);transform-origin:0 0">Core Temperatures</div>
<div class="t hw" style="left:1187.09px;top:597.13px;font-size:9.70px;color:#1e1e1e;transform:scaleX(0.9400);transform-origin:0 0">77.6 °C</div>
<div class="t hw" style="left:1252.49px;top:597.13px;font-size:9.70px;color:#1e1e1e;transform:scaleX(0.9400);transform-origin:0 0">24.9 °C</div>
<div class="t hw" style="left:1318.49px;top:597.13px;font-size:9.70px;color:#1e1e1e;transform:scaleX(0.9400);transform-origin:0 0">82.9 °C</div>
<div class="t hw" style="left:1384.29px;top:597.13px;font-size:9.70px;color:#1e1e1e;transform:scaleX(0.9400);transform-origin:0 0">60.5 °C</div>
<div class="abs" style="left:1157px;top:609.11px;width:65.7px;height:14px;background:#cce4f7"></div>
<svg class="abs" style="left:1000.0px;top:611.1px" width="6" height="10" viewBox="0 0 6 10"><path d="M0.8 0.8 L4.8 5 L0.8 9.2" fill="none" stroke="#5e5e5e" stroke-width="1.25"/></svg>
<svg class="abs" style="left:1014.5px;top:610.6px" width="6" height="11" viewBox="0 0 6 11"><rect x="2.2" y="0.5" width="1.6" height="7" fill="#d02020"/><circle cx="3" cy="8.6" r="1.9" fill="#c81818"/></svg>
<div class="t hw" style="left:1026.00px;top:611.10px;font-size:9.70px;color:#1e1e1e;transform:scaleX(0.9131);transform-origin:0 0">L3 Temperatures</div>
<div class="t hw" style="left:1187.09px;top:611.10px;font-size:9.70px;color:#1e1e1e;transform:scaleX(0.9400);transform-origin:0 0">46.9 °C</div>
<div class="t hw" style="left:1252.49px;top:611.10px;font-size:9.70px;color:#1e1e1e;transform:scaleX(0.9400);transform-origin:0 0">27.3 °C</div>
<div class="t hw" style="left:1318.49px;top:611.10px;font-size:9.70px;color:#1e1e1e;transform:scaleX(0.9400);transform-origin:0 0">47.1 °C</div>
<div class="t hw" style="left:1384.29px;top:611.10px;font-size:9.70px;color:#1e1e1e;transform:scaleX(0.9400);transform-origin:0 0">40.8 °C</div>
<div class="abs" style="left:1157px;top:623.08px;width:65.7px;height:14px;background:#cce4f7"></div>
<svg class="abs" style="left:1001.5px;top:624.6px" width="6" height="11" viewBox="0 0 6 11"><rect x="2.2" y="0.5" width="1.6" height="7" fill="#d02020"/><circle cx="3" cy="8.6" r="1.9" fill="#c81818"/></svg>
<div class="t hw" style="left:1013.00px;top:625.07px;font-size:9.70px;color:#1e1e1e;transform:scaleX(0.8910);transform-origin:0 0">CPU IOD Hotspot</div>
<div class="t hw" style="left:1187.09px;top:625.07px;font-size:9.70px;color:#1e1e1e;transform:scaleX(0.9400);transform-origin:0 0">40.0 °C</div>
<div class="t hw" style="left:1252.49px;top:625.07px;font-size:9.70px;color:#1e1e1e;transform:scaleX(0.9400);transform-origin:0 0">33.8 °C</div>
<div class="t hw" style="left:1318.49px;top:625.07px;font-size:9.70px;color:#1e1e1e;transform:scaleX(0.9400);transform-origin:0 0">40.5 °C</div>
<div class="t hw" style="left:1384.29px;top:625.07px;font-size:9.70px;color:#1e1e1e;transform:scaleX(0.9400);transform-origin:0 0">38.0 °C</div>
<div class="abs" style="left:1012.0px;top:637.05px;width:408.6px;height:14px;background:#efefef"></div>
<svg class="abs" style="left:1001.5px;top:638.5px" width="6" height="11" viewBox="0 0 6 11"><rect x="2.2" y="0.5" width="1.6" height="7" fill="#d02020"/><circle cx="3" cy="8.6" r="1.9" fill="#c81818"/></svg>
<div class="t hw" style="left:1013.00px;top:639.04px;font-size:9.70px;color:#1e1e1e;transform:scaleX(0.8913);transform-origin:0 0">CPU IOD Average</div>
<div class="t hw" style="left:1187.09px;top:639.04px;font-size:9.70px;color:#1e1e1e;transform:scaleX(0.9400);transform-origin:0 0">34.2 °C</div>
<div class="t hw" style="left:1252.49px;top:639.04px;font-size:9.70px;color:#1e1e1e;transform:scaleX(0.9400);transform-origin:0 0">31.0 °C</div>
<div class="t hw" style="left:1318.49px;top:639.04px;font-size:9.70px;color:#1e1e1e;transform:scaleX(0.9400);transform-origin:0 0">34.5 °C</div>
<div class="t hw" style="left:1384.29px;top:639.04px;font-size:9.70px;color:#1e1e1e;transform:scaleX(0.9400);transform-origin:0 0">33.2 °C</div>
<svg class="abs" style="left:1001.5px;top:652.5px" width="6" height="11" viewBox="0 0 6 11"><rect x="2.2" y="0.5" width="1.6" height="7" fill="#d02020"/><circle cx="3" cy="8.6" r="1.9" fill="#c81818"/></svg>
<div class="t hw" style="left:1013.00px;top:653.01px;font-size:9.70px;color:#1e1e1e;transform:scaleX(0.8359);transform-origin:0 0">CPU VDDCR_VDD VRM (SVI3 TFN)</div>
<div class="t hw" style="left:1187.09px;top:653.01px;font-size:9.70px;color:#1e1e1e;transform:scaleX(0.9400);transform-origin:0 0">58.1 °C</div>
<div class="t hw" style="left:1252.49px;top:653.01px;font-size:9.70px;color:#1e1e1e;transform:scaleX(0.9400);transform-origin:0 0">48.0 °C</div>
<div class="t hw" style="left:1318.49px;top:653.01px;font-size:9.70px;color:#1e1e1e;transform:scaleX(0.9400);transform-origin:0 0">58.1 °C</div>
<div class="t hw" style="left:1384.29px;top:653.01px;font-size:9.70px;color:#1e1e1e;transform:scaleX(0.9400);transform-origin:0 0">53.6 °C</div>
<div class="abs" style="left:1012.0px;top:664.99px;width:408.6px;height:14px;background:#efefef"></div>
<svg class="abs" style="left:1001.5px;top:666.5px" width="6" height="11" viewBox="0 0 6 11"><rect x="2.2" y="0.5" width="1.6" height="7" fill="#d02020"/><circle cx="3" cy="8.6" r="1.9" fill="#c81818"/></svg>
<div class="t hw" style="left:1013.00px;top:666.98px;font-size:9.70px;color:#1e1e1e;transform:scaleX(0.8356);transform-origin:0 0">CPU VDDCR_SOC VRM (SVI3 TFN)</div>
<div class="t hw" style="left:1187.09px;top:666.98px;font-size:9.70px;color:#1e1e1e;transform:scaleX(0.9400);transform-origin:0 0">55.0 °C</div>
<div class="t hw" style="left:1252.49px;top:666.98px;font-size:9.70px;color:#1e1e1e;transform:scaleX(0.9400);transform-origin:0 0">46.0 °C</div>
<div class="t hw" style="left:1318.49px;top:666.98px;font-size:9.70px;color:#1e1e1e;transform:scaleX(0.9400);transform-origin:0 0">55.0 °C</div>
<div class="t hw" style="left:1384.29px;top:666.98px;font-size:9.70px;color:#1e1e1e;transform:scaleX(0.9400);transform-origin:0 0">50.6 °C</div>
<svg class="abs" style="left:1001.5px;top:680.5px" width="6" height="11" viewBox="0 0 6 11"><rect x="2.2" y="0.5" width="1.6" height="7" fill="#d02020"/><circle cx="3" cy="8.6" r="1.9" fill="#c81818"/></svg>
<div class="t hw" style="left:1013.00px;top:680.95px;font-size:9.70px;color:#1e1e1e;transform:scaleX(0.8417);transform-origin:0 0">CPU VDD_MISC VRM (SVI3 TFN)</div>
<div class="t hw" style="left:1187.09px;top:680.95px;font-size:9.70px;color:#1e1e1e;transform:scaleX(0.9400);transform-origin:0 0">54.0 °C</div>
<div class="t hw" style="left:1252.49px;top:680.95px;font-size:9.70px;color:#1e1e1e;transform:scaleX(0.9400);transform-origin:0 0">49.0 °C</div>
<div class="t hw" style="left:1318.49px;top:680.95px;font-size:9.70px;color:#1e1e1e;transform:scaleX(0.9400);transform-origin:0 0">54.0 °C</div>
<div class="t hw" style="left:1384.29px;top:680.95px;font-size:9.70px;color:#1e1e1e;transform:scaleX(0.9400);transform-origin:0 0">51.5 °C</div>
<div class="abs" style="left:1012.0px;top:692.93px;width:408.6px;height:14px;background:#efefef"></div>
<div class="abs" style="left:1157px;top:692.93px;width:65.7px;height:14px;background:#cce4f7"></div>
<svg class="abs" style="left:1000.5px;top:693.9px" width="9" height="12" viewBox="0 0 9 12"><defs><linearGradient id="bg2" x1="0" y1="0" x2="0" y2="1"><stop offset="0" stop-color="#f4d000"/><stop offset="1" stop-color="#f08a10"/></linearGradient></defs><path d="M5.6 0.3 L1.8 6.4 L4.4 6.4 L2.6 11.7 L7.4 4.8 L4.9 4.8 Z" fill="url(#bg2)"/></svg>
<div class="t hw" style="left:1013.00px;top:694.92px;font-size:9.70px;color:#1e1e1e;transform:scaleX(0.8776);transform-origin:0 0">CPU VDDCR_VDD Voltage (SVI3 T...</div>
<div class="t hw" style="left:1187.84px;top:694.92px;font-size:9.70px;color:#1e1e1e;transform:scaleX(0.8900);transform-origin:0 0">1.080 V</div>
<div class="t hw" style="left:1253.24px;top:694.92px;font-size:9.70px;color:#1e1e1e;transform:scaleX(0.8900);transform-origin:0 0">1.007 V</div>
<div class="t hw" style="left:1319.24px;top:694.92px;font-size:9.70px;color:#1e1e1e;transform:scaleX(0.8900);transform-origin:0 0">1.295 V</div>
<div class="t hw" style="left:1385.04px;top:694.92px;font-size:9.70px;color:#1e1e1e;transform:scaleX(0.8900);transform-origin:0 0">1.079 V</div>
<svg class="abs" style="left:1000.5px;top:707.9px" width="9" height="12" viewBox="0 0 9 12"><defs><linearGradient id="bg3" x1="0" y1="0" x2="0" y2="1"><stop offset="0" stop-color="#f4d000"/><stop offset="1" stop-color="#f08a10"/></linearGradient></defs><path d="M5.6 0.3 L1.8 6.4 L4.4 6.4 L2.6 11.7 L7.4 4.8 L4.9 4.8 Z" fill="url(#bg3)"/></svg>
<div class="t hw" style="left:1013.00px;top:708.89px;font-size:9.70px;color:#1e1e1e;transform:scaleX(0.8765);transform-origin:0 0">CPU VDDCR_SOC Voltage (SVI3 T...</div>
<div class="t hw" style="left:1187.84px;top:708.89px;font-size:9.70px;color:#1e1e1e;transform:scaleX(0.8900);transform-origin:0 0">1.200 V</div>
<div class="t hw" style="left:1253.24px;top:708.89px;font-size:9.70px;color:#1e1e1e;transform:scaleX(0.8900);transform-origin:0 0">1.200 V</div>
<div class="t hw" style="left:1319.24px;top:708.89px;font-size:9.70px;color:#1e1e1e;transform:scaleX(0.8900);transform-origin:0 0">1.200 V</div>
<div class="t hw" style="left:1385.04px;top:708.89px;font-size:9.70px;color:#1e1e1e;transform:scaleX(0.8900);transform-origin:0 0">1.200 V</div>
<div class="abs" style="left:1012.0px;top:720.87px;width:408.6px;height:14px;background:#efefef"></div>
<svg class="abs" style="left:1000.5px;top:721.9px" width="9" height="12" viewBox="0 0 9 12"><defs><linearGradient id="bg4" x1="0" y1="0" x2="0" y2="1"><stop offset="0" stop-color="#f4d000"/><stop offset="1" stop-color="#f08a10"/></linearGradient></defs><path d="M5.6 0.3 L1.8 6.4 L4.4 6.4 L2.6 11.7 L7.4 4.8 L4.9 4.8 Z" fill="url(#bg4)"/></svg>
<div class="t hw" style="left:1013.00px;top:722.86px;font-size:9.70px;color:#1e1e1e;transform:scaleX(0.8642);transform-origin:0 0">CPU VDD_MISC Voltage (SVI3 TFN)</div>
<div class="t hw" style="left:1187.84px;top:722.86px;font-size:9.70px;color:#1e1e1e;transform:scaleX(0.8900);transform-origin:0 0">1.100 V</div>
<div class="t hw" style="left:1253.24px;top:722.86px;font-size:9.70px;color:#1e1e1e;transform:scaleX(0.8900);transform-origin:0 0">1.100 V</div>
<div class="t hw" style="left:1319.24px;top:722.86px;font-size:9.70px;color:#1e1e1e;transform:scaleX(0.8900);transform-origin:0 0">1.100 V</div>
<div class="t hw" style="left:1385.04px;top:722.86px;font-size:9.70px;color:#1e1e1e;transform:scaleX(0.8900);transform-origin:0 0">1.100 V</div>
<div class="abs" style="left:1157px;top:734.84px;width:65.7px;height:14px;background:#cce4f7"></div>
<svg class="abs" style="left:1000.5px;top:735.8px" width="9" height="12" viewBox="0 0 9 12"><defs><linearGradient id="bg5" x1="0" y1="0" x2="0" y2="1"><stop offset="0" stop-color="#f4d000"/><stop offset="1" stop-color="#f08a10"/></linearGradient></defs><path d="M5.6 0.3 L1.8 6.4 L4.4 6.4 L2.6 11.7 L7.4 4.8 L4.9 4.8 Z" fill="url(#bg5)"/></svg>
<div class="t hw" style="left:1013.00px;top:736.83px;font-size:9.70px;color:#1e1e1e;transform:scaleX(0.8861);transform-origin:0 0">CPU Core Current (SVI3 TFN)</div>
<div class="t hw" style="left:1178.06px;top:736.83px;font-size:9.70px;color:#1e1e1e;transform:scaleX(0.9200);transform-origin:0 0">110.986 A</div>
<div class="t hw" style="left:1252.73px;top:736.83px;font-size:9.70px;color:#1e1e1e;transform:scaleX(0.9200);transform-origin:0 0">1.323 A</div>
<div class="t hw" style="left:1310.13px;top:736.83px;font-size:9.70px;color:#1e1e1e;transform:scaleX(0.9200);transform-origin:0 0">111.681 A</div>
<div class="t hw" style="left:1379.57px;top:736.83px;font-size:9.70px;color:#1e1e1e;transform:scaleX(0.9200);transform-origin:0 0">75.246 A</div>
<div class="abs" style="left:1012.0px;top:748.81px;width:408.6px;height:14px;background:#efefef"></div>
<div class="abs" style="left:1157px;top:748.81px;width:65.7px;height:14px;background:#cce4f7"></div>
<svg class="abs" style="left:1000.5px;top:749.8px" width="9" height="12" viewBox="0 0 9 12"><defs><linearGradient id="bg6" x1="0" y1="0" x2="0" y2="1"><stop offset="0" stop-color="#f4d000"/><stop offset="1" stop-color="#f08a10"/></linearGradient></defs><path d="M5.6 0.3 L1.8 6.4 L4.4 6.4 L2.6 11.7 L7.4 4.8 L4.9 4.8 Z" fill="url(#bg6)"/></svg>
<div class="t hw" style="left:1013.00px;top:750.80px;font-size:9.70px;color:#1e1e1e;transform:scaleX(0.8837);transform-origin:0 0">SoC Current (SVI3 TFN)</div>
<div class="t hw" style="left:1183.03px;top:750.80px;font-size:9.70px;color:#1e1e1e;transform:scaleX(0.9200);transform-origin:0 0">11.099 A</div>
<div class="t hw" style="left:1252.73px;top:750.80px;font-size:9.70px;color:#1e1e1e;transform:scaleX(0.9200);transform-origin:0 0">9.778 A</div>
<div class="t hw" style="left:1313.77px;top:750.80px;font-size:9.70px;color:#1e1e1e;transform:scaleX(0.9200);transform-origin:0 0">12.972 A</div>
<div class="t hw" style="left:1379.57px;top:750.80px;font-size:9.70px;color:#1e1e1e;transform:scaleX(0.9200);transform-origin:0 0">10.997 A</div>
<div class="abs" style="left:1157px;top:762.78px;width:65.7px;height:14px;background:#cce4f7"></div>
<svg class="abs" style="left:1000.5px;top:763.8px" width="9" height="12" viewBox="0 0 9 12"><defs><linearGradient id="bg7" x1="0" y1="0" x2="0" y2="1"><stop offset="0" stop-color="#f4d000"/><stop offset="1" stop-color="#f08a10"/></linearGradient></defs><path d="M5.6 0.3 L1.8 6.4 L4.4 6.4 L2.6 11.7 L7.4 4.8 L4.9 4.8 Z" fill="url(#bg7)"/></svg>
<div class="t hw" style="left:1013.00px;top:764.77px;font-size:9.70px;color:#1e1e1e;transform:scaleX(0.8152);transform-origin:0 0">CPU TDC</div>
<div class="t hw" style="left:1178.73px;top:764.77px;font-size:9.70px;color:#1e1e1e;transform:scaleX(0.9200);transform-origin:0 0">111.021 A</div>
<div class="t hw" style="left:1252.73px;top:764.77px;font-size:9.70px;color:#1e1e1e;transform:scaleX(0.9200);transform-origin:0 0">1.245 A</div>
<div class="t hw" style="left:1310.13px;top:764.77px;font-size:9.70px;color:#1e1e1e;transform:scaleX(0.9200);transform-origin:0 0">111.816 A</div>
<div class="t hw" style="left:1379.57px;top:764.77px;font-size:9.70px;color:#1e1e1e;transform:scaleX(0.9200);transform-origin:0 0">75.248 A</div>
<div class="abs" style="left:1012.0px;top:776.75px;width:408.6px;height:14px;background:#efefef"></div>
<div class="abs" style="left:1157px;top:776.75px;width:65.7px;height:14px;background:#cce4f7"></div>
<svg class="abs" style="left:1000.5px;top:777.8px" width="9" height="12" viewBox="0 0 9 12"><defs><linearGradient id="bg8" x1="0" y1="0" x2="0" y2="1"><stop offset="0" stop-color="#f4d000"/><stop offset="1" stop-color="#f08a10"/></linearGradient></defs><path d="M5.6 0.3 L1.8 6.4 L4.4 6.4 L2.6 11.7 L7.4 4.8 L4.9 4.8 Z" fill="url(#bg8)"/></svg>
<div class="t hw" style="left:1013.00px;top:778.74px;font-size:9.70px;color:#1e1e1e;transform:scaleX(0.8017);transform-origin:0 0">CPU EDC</div>
<div class="t hw" style="left:1177.40px;top:778.74px;font-size:9.70px;color:#1e1e1e;transform:scaleX(0.9200);transform-origin:0 0">120.500 A</div>
<div class="t hw" style="left:1247.77px;top:778.74px;font-size:9.70px;color:#1e1e1e;transform:scaleX(0.9200);transform-origin:0 0">10.500 A</div>
<div class="t hw" style="left:1308.80px;top:778.74px;font-size:9.70px;color:#1e1e1e;transform:scaleX(0.9200);transform-origin:0 0">120.500 A</div>
<div class="t hw" style="left:1379.57px;top:778.74px;font-size:9.70px;color:#1e1e1e;transform:scaleX(0.9200);transform-origin:0 0">87.922 A</div>
<div class="abs" style="left:1157px;top:790.72px;width:65.7px;height:14px;background:#cce4f7"></div>
<svg class="abs" style="left:1000.5px;top:791.7px" width="9" height="12" viewBox="0 0 9 12"><defs><linearGradient id="bg9" x1="0" y1="0" x2="0" y2="1"><stop offset="0" stop-color="#f4d000"/><stop offset="1" stop-color="#f08a10"/></linearGradient></defs><path d="M5.6 0.3 L1.8 6.4 L4.4 6.4 L2.6 11.7 L7.4 4.8 L4.9 4.8 Z" fill="url(#bg9)"/></svg>
<div class="t hw" style="left:1013.00px;top:792.71px;font-size:9.70px;color:#1e1e1e;transform:scaleX(0.8895);transform-origin:0 0">MISC Current (SVI3 TFN)</div>
<div class="t hw" style="left:1187.33px;top:792.71px;font-size:9.70px;color:#1e1e1e;transform:scaleX(0.9200);transform-origin:0 0">6.153 A</div>
<div class="t hw" style="left:1252.73px;top:792.71px;font-size:9.70px;color:#1e1e1e;transform:scaleX(0.9200);transform-origin:0 0">4.346 A</div>
<div class="t hw" style="left:1318.73px;top:792.71px;font-size:9.70px;color:#1e1e1e;transform:scaleX(0.9200);transform-origin:0 0">7.301 A</div>
<div class="t hw" style="left:1384.53px;top:792.71px;font-size:9.70px;color:#1e1e1e;transform:scaleX(0.9200);transform-origin:0 0">5.938 A</div>
<div class="abs" style="left:1012.0px;top:804.69px;width:408.6px;height:14px;background:#efefef"></div>
<div class="abs" style="left:1157px;top:804.69px;width:65.7px;height:14px;background:#cce4f7"></div>
<svg class="abs" style="left:1000.5px;top:805.7px" width="9" height="12" viewBox="0 0 9 12"><defs><linearGradient id="bg10" x1="0" y1="0" x2="0" y2="1"><stop offset="0" stop-color="#f4d000"/><stop offset="1" stop-color="#f08a10"/></linearGradient></defs><path d="M5.6 0.3 L1.8 6.4 L4.4 6.4 L2.6 11.7 L7.4 4.8 L4.9 4.8 Z" fill="url(#bg10)"/></svg>
<div class="t hw" style="left:1013.00px;top:806.68px;font-size:9.70px;color:#1e1e1e;transform:scaleX(0.8616);transform-origin:0 0">CPU Package Power</div>
<div class="t hw" style="left:1169.28px;top:806.68px;font-size:9.70px;color:#1e1e1e;transform:scaleX(1.0300);transform-origin:0 0">144.430 W</div>
<div class="t hw" style="left:1240.24px;top:806.68px;font-size:9.70px;color:#1e1e1e;transform:scaleX(1.0300);transform-origin:0 0">25.695 W</div>
<div class="t hw" style="left:1300.68px;top:806.68px;font-size:9.70px;color:#1e1e1e;transform:scaleX(1.0300);transform-origin:0 0">145.076 W</div>
<div class="t hw" style="left:1366.48px;top:806.68px;font-size:9.70px;color:#1e1e1e;transform:scaleX(1.0300);transform-origin:0 0">106.801 W</div>
<div class="abs" style="left:1157px;top:818.66px;width:65.7px;height:14px;background:#cce4f7"></div>
<svg class="abs" style="left:1000.0px;top:820.7px" width="6" height="10" viewBox="0 0 6 10"><path d="M0.8 0.8 L4.8 5 L0.8 9.2" fill="none" stroke="#5e5e5e" stroke-width="1.25"/></svg>
<svg class="abs" style="left:1013.5px;top:819.7px" width="9" height="12" viewBox="0 0 9 12"><defs><linearGradient id="bg11" x1="0" y1="0" x2="0" y2="1"><stop offset="0" stop-color="#f4d000"/><stop offset="1" stop-color="#f08a10"/></linearGradient></defs><path d="M5.6 0.3 L1.8 6.4 L4.4 6.4 L2.6 11.7 L7.4 4.8 L4.9 4.8 Z" fill="url(#bg11)"/></svg>
<div class="t hw" style="left:1026.00px;top:820.65px;font-size:9.70px;color:#1e1e1e;transform:scaleX(0.8954);transform-origin:0 0">Core Powers</div>
<div class="t hw" style="left:1174.84px;top:820.65px;font-size:9.70px;color:#1e1e1e;transform:scaleX(1.0300);transform-origin:0 0">14.477 W</div>
<div class="t hw" style="left:1245.79px;top:820.65px;font-size:9.70px;color:#1e1e1e;transform:scaleX(1.0300);transform-origin:0 0">0.016 W</div>
<div class="t hw" style="left:1306.24px;top:820.65px;font-size:9.70px;color:#1e1e1e;transform:scaleX(1.0300);transform-origin:0 0">15.602 W</div>
<div class="t hw" style="left:1377.59px;top:820.65px;font-size:9.70px;color:#1e1e1e;transform:scaleX(1.0300);transform-origin:0 0">9.905 W</div>
<div class="abs" style="left:1012.0px;top:832.63px;width:408.6px;height:14px;background:#efefef"></div>
<div class="abs" style="left:1157px;top:832.63px;width:65.7px;height:14px;background:#cce4f7"></div>
<svg class="abs" style="left:1000.5px;top:833.6px" width="9" height="12" viewBox="0 0 9 12"><defs><linearGradient id="bg12" x1="0" y1="0" x2="0" y2="1"><stop offset="0" stop-color="#f4d000"/><stop offset="1" stop-color="#f08a10"/></linearGradient></defs><path d="M5.6 0.3 L1.8 6.4 L4.4 6.4 L2.6 11.7 L7.4 4.8 L4.9 4.8 Z" fill="url(#bg12)"/></svg>
<div class="t hw" style="left:1013.00px;top:834.62px;font-size:9.70px;color:#1e1e1e;transform:scaleX(0.9139);transform-origin:0 0">CPU Core Power (SVI3 TFN)</div>
<div class="t hw" style="left:1170.02px;top:834.62px;font-size:9.70px;color:#1e1e1e;transform:scaleX(1.0300);transform-origin:0 0">119.816 W</div>
<div class="t hw" style="left:1245.79px;top:834.62px;font-size:9.70px;color:#1e1e1e;transform:scaleX(1.0300);transform-origin:0 0">1.388 W</div>
<div class="t hw" style="left:1300.68px;top:834.62px;font-size:9.70px;color:#1e1e1e;transform:scaleX(1.0300);transform-origin:0 0">120.786 W</div>
<div class="t hw" style="left:1372.04px;top:834.62px;font-size:9.70px;color:#1e1e1e;transform:scaleX(1.0300);transform-origin:0 0">81.581 W</div>
<div class="abs" style="left:1157px;top:846.60px;width:65.7px;height:14px;background:#cce4f7"></div>
<svg class="abs" style="left:1000.5px;top:847.6px" width="9" height="12" viewBox="0 0 9 12"><defs><linearGradient id="bg13" x1="0" y1="0" x2="0" y2="1"><stop offset="0" stop-color="#f4d000"/><stop offset="1" stop-color="#f08a10"/></linearGradient></defs><path d="M5.6 0.3 L1.8 6.4 L4.4 6.4 L2.6 11.7 L7.4 4.8 L4.9 4.8 Z" fill="url(#bg13)"/></svg>
<div class="t hw" style="left:1013.00px;top:848.59px;font-size:9.70px;color:#1e1e1e;transform:scaleX(0.8587);transform-origin:0 0">CPU SoC Power (SVI3 TFN)</div>
<div class="t hw" style="left:1174.84px;top:848.59px;font-size:9.70px;color:#1e1e1e;transform:scaleX(1.0300);transform-origin:0 0">13.319 W</div>
<div class="t hw" style="left:1240.98px;top:848.59px;font-size:9.70px;color:#1e1e1e;transform:scaleX(1.0300);transform-origin:0 0">11.734 W</div>
<div class="t hw" style="left:1306.24px;top:848.59px;font-size:9.70px;color:#1e1e1e;transform:scaleX(1.0300);transform-origin:0 0">15.566 W</div>
<div class="t hw" style="left:1372.04px;top:848.59px;font-size:9.70px;color:#1e1e1e;transform:scaleX(1.0300);transform-origin:0 0">13.196 W</div>
<div class="abs" style="left:1012.0px;top:860.57px;width:408.6px;height:14px;background:#efefef"></div>
<div class="abs" style="left:1157px;top:860.57px;width:65.7px;height:14px;background:#cce4f7"></div>
<svg class="abs" style="left:1000.5px;top:861.6px" width="9" height="12" viewBox="0 0 9 12"><defs><linearGradient id="bg14" x1="0" y1="0" x2="0" y2="1"><stop offset="0" stop-color="#f4d000"/><stop offset="1" stop-color="#f08a10"/></linearGradient></defs><path d="M5.6 0.3 L1.8 6.4 L4.4 6.4 L2.6 11.7 L7.4 4.8 L4.9 4.8 Z" fill="url(#bg14)"/></svg>
<div class="t hw" style="left:1013.00px;top:862.56px;font-size:9.70px;color:#1e1e1e;transform:scaleX(0.8936);transform-origin:0 0">Core+SoC+MISC Power (SVI3 TFN)</div>
<div class="t hw" style="left:1169.28px;top:862.56px;font-size:9.70px;color:#1e1e1e;transform:scaleX(1.0300);transform-origin:0 0">139.904 W</div>
<div class="t hw" style="left:1240.24px;top:862.56px;font-size:9.70px;color:#1e1e1e;transform:scaleX(1.0300);transform-origin:0 0">17.902 W</div>
<div class="t hw" style="left:1300.68px;top:862.56px;font-size:9.70px;color:#1e1e1e;transform:scaleX(1.0300);transform-origin:0 0">140.834 W</div>
<div class="t hw" style="left:1366.48px;top:862.56px;font-size:9.70px;color:#1e1e1e;transform:scaleX(1.0300);transform-origin:0 0">101.309 W</div>
<div class="abs" style="left:1157px;top:874.54px;width:65.7px;height:14px;background:#cce4f7"></div>
<svg class="abs" style="left:1000.5px;top:875.5px" width="9" height="12" viewBox="0 0 9 12"><defs><linearGradient id="bg15" x1="0" y1="0" x2="0" y2="1"><stop offset="0" stop-color="#f4d000"/><stop offset="1" stop-color="#f08a10"/></linearGradient></defs><path d="M5.6 0.3 L1.8 6.4 L4.4 6.4 L2.6 11.7 L7.4 4.8 L4.9 4.8 Z" fill="url(#bg15)"/></svg>
<div class="t hw" style="left:1013.00px;top:876.53px;font-size:9.70px;color:#1e1e1e;transform:scaleX(0.8516);transform-origin:0 0">CPU PPT</div>
<div class="t hw" style="left:1170.02px;top:876.53px;font-size:9.70px;color:#1e1e1e;transform:scaleX(1.0300);transform-origin:0 0">146.113 W</div>
<div class="t hw" style="left:1240.24px;top:876.53px;font-size:9.70px;color:#1e1e1e;transform:scaleX(1.0300);transform-origin:0 0">23.958 W</div>
<div class="t hw" style="left:1300.68px;top:876.53px;font-size:9.70px;color:#1e1e1e;transform:scaleX(1.0300);transform-origin:0 0">147.146 W</div>
<div class="t hw" style="left:1366.48px;top:876.53px;font-size:9.70px;color:#1e1e1e;transform:scaleX(1.0300);transform-origin:0 0">107.490 W</div>
<div class="abs" style="left:1012.0px;top:888.51px;width:408.6px;height:14px;background:#efefef"></div>
<svg class="abs" style="left:1000.5px;top:890.0px" width="10" height="11" viewBox="0 0 10 11"><path d="M8.6 2.3 A4.4 4.4 0 1 0 8.9 8.2" fill="none" stroke="#484848" stroke-width="1.4"/><path d="M5.4 2.9 L4.7 5.8 L6.9 7.4" fill="none" stroke="#3c3c3c" stroke-width="1.25"/></svg>
<div class="t hw" style="left:1013.00px;top:890.50px;font-size:9.70px;color:#1e1e1e;transform:scaleX(0.9233);transform-origin:0 0">CPU Relative Clock (DPU)</div>
<div class="t hw" style="left:1167.83px;top:890.50px;font-size:9.70px;color:#1e1e1e;transform:scaleX(0.9050);transform-origin:0 0">2,010.0 MHz</div>
<div class="t hw" style="left:1233.23px;top:890.50px;font-size:9.70px;color:#1e1e1e;transform:scaleX(0.9050);transform-origin:0 0">2,010.0 MHz</div>
<div class="t hw" style="left:1299.23px;top:890.50px;font-size:9.70px;color:#1e1e1e;transform:scaleX(0.9050);transform-origin:0 0">2,010.0 MHz</div>
<div class="t hw" style="left:1365.03px;top:890.50px;font-size:9.70px;color:#1e1e1e;transform:scaleX(0.9050);transform-origin:0 0">2,010.0 MHz</div></body></html>
